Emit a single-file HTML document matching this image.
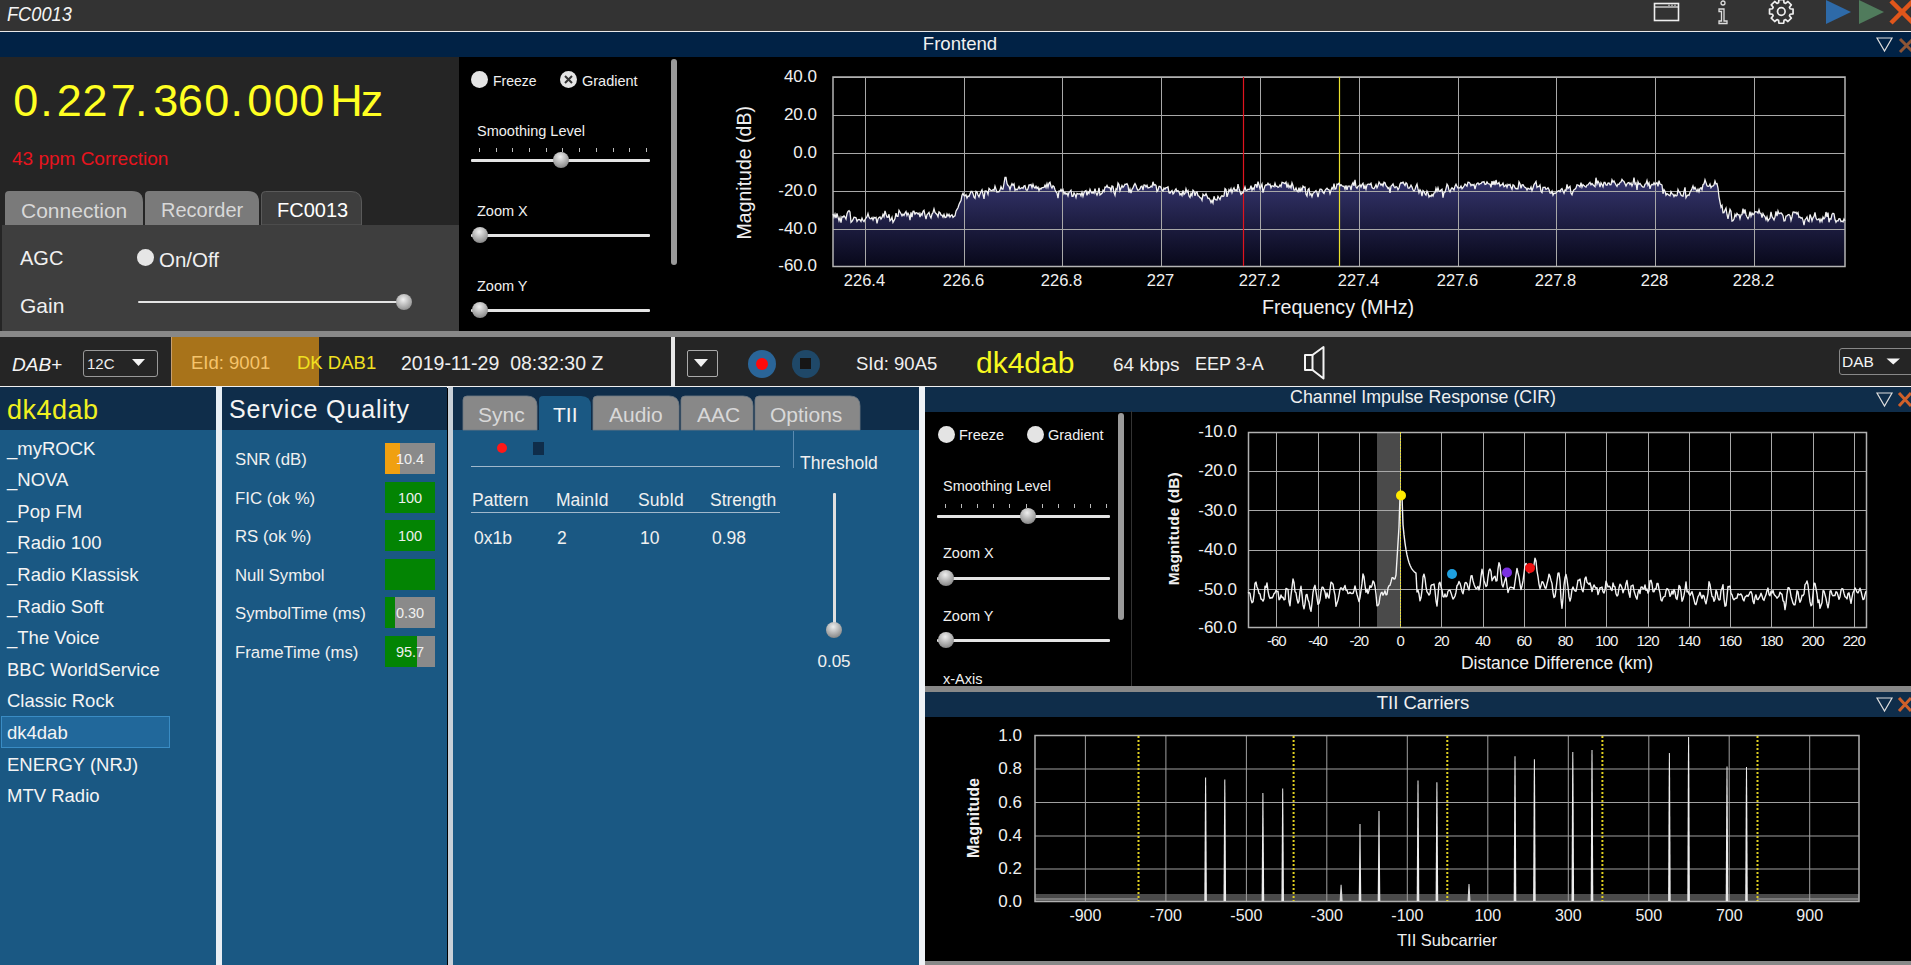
<!DOCTYPE html><html><head><meta charset="utf-8"><style>
html,body{margin:0;padding:0;width:1911px;height:965px;overflow:hidden;background:#000;font-family:"Liberation Sans",sans-serif;}
.t{position:absolute;white-space:pre;line-height:1;}
.b{position:absolute;}
svg{position:absolute;overflow:visible;}
</style></head><body>
<div class="b" style="left:0px;top:0px;width:1911px;height:31px;background:#333333;"></div>
<div class="t" style="left:7px;top:4.3px;font-size:20px;color:#f4f4f4;font-style:italic;transform:scaleX(0.91);transform-origin:0 0;">FC0013</div>
<div class="b" style="left:0px;top:31px;width:1911px;height:1px;background:#e8e8e8;"></div>
<svg style="left:0;top:0" width="1911" height="31">
<rect x="1654.5" y="3.5" width="24" height="17" fill="none" stroke="#eee" stroke-width="1.6"/>
<line x1="1654.5" y1="7" x2="1678.5" y2="7" stroke="#eee" stroke-width="1.2"/>
<circle cx="1669" cy="5.3" r="0.7" fill="#eee"/><circle cx="1672" cy="5.3" r="0.7" fill="#eee"/><circle cx="1675" cy="5.3" r="0.7" fill="#eee"/>
<circle cx="1723" cy="3" r="2" fill="none" stroke="#ddd" stroke-width="1.3"/>
<path d="M1719 9 h5 v12 h3 v2.5 h-8 v-2.5 h2.5 v-9.5 h-2.5z" fill="none" stroke="#ddd" stroke-width="1.3"/>
<g transform="translate(1781.3,11.5)">
<path d="M-2.72,-8.79 L-2.38,-11.76 L2.38,-11.76 L2.72,-8.79 L4.29,-8.14 L6.63,-10.00 L10.00,-6.63 L8.14,-4.29 L8.79,-2.72 L11.76,-2.38 L11.76,2.38 L8.79,2.72 L8.14,4.29 L10.00,6.63 L6.63,10.00 L4.29,8.14 L2.72,8.79 L2.38,11.76 L-2.38,11.76 L-2.72,8.79 L-4.29,8.14 L-6.63,10.00 L-10.00,6.63 L-8.14,4.29 L-8.79,2.72 L-11.76,2.38 L-11.76,-2.38 L-8.79,-2.72 L-8.14,-4.29 L-10.00,-6.63 L-6.63,-10.00 L-4.29,-8.14 Z" fill="none" stroke="#eee" stroke-width="1.7" stroke-linejoin="round"/>
<circle cx="0" cy="0" r="3.8" fill="none" stroke="#eee" stroke-width="1.7"/>
</g>
<path d="M1826 0 L1851 12 L1826 24 Z" fill="#2e6aa8"/>
<path d="M1859 0 L1884 12 L1859 24 Z" fill="#507b5c"/>
<path d="M1891 1 L1913 23 M1913 1 L1891 23" stroke="#e0561b" stroke-width="4.5"/>
</svg>
<div class="b" style="left:0px;top:32px;width:1911px;height:25px;background:#012245;"></div>
<div class="t" style="left:0px;top:35px;font-size:18.6px;color:#f0f0f0;width:1920px;text-align:center;">Frontend</div>
<svg style="left:0;top:32" width="1911" height="25">
<path d="M1877 6 L1892 6 L1884.5 19 Z" fill="none" stroke="#ddd" stroke-width="1.2"/>
<path d="M1900 7 L1913 20 M1913 7 L1900 20" stroke="#8f5535" stroke-width="3"/>
</svg>
<div class="b" style="left:0px;top:57px;width:459px;height:274px;background:#252525;"></div>
<div class="t" style="left:13.26px;top:77.9px;font-size:45px;color:#ffff22;">0</div>
<div class="t" style="left:40.2px;top:77.9px;font-size:45px;color:#ffff22;">.</div>
<div class="t" style="left:56.75px;top:77.9px;font-size:45px;color:#ffff22;">2</div>
<div class="t" style="left:82.55px;top:77.9px;font-size:45px;color:#ffff22;">2</div>
<div class="t" style="left:110.65px;top:77.9px;font-size:45px;color:#ffff22;">7</div>
<div class="t" style="left:134.9px;top:77.9px;font-size:45px;color:#ffff22;">.</div>
<div class="t" style="left:153.26px;top:77.9px;font-size:45px;color:#ffff22;">3</div>
<div class="t" style="left:177.75px;top:77.9px;font-size:45px;color:#ffff22;">6</div>
<div class="t" style="left:204.26px;top:77.9px;font-size:45px;color:#ffff22;">0</div>
<div class="t" style="left:230.4px;top:77.9px;font-size:45px;color:#ffff22;">.</div>
<div class="t" style="left:247.26px;top:77.9px;font-size:45px;color:#ffff22;">0</div>
<div class="t" style="left:273.66px;top:77.9px;font-size:45px;color:#ffff22;">0</div>
<div class="t" style="left:299.26px;top:77.9px;font-size:45px;color:#ffff22;">0</div>
<div class="t" style="left:330.3px;top:77.9px;font-size:45px;color:#ffff22;">H</div>
<div class="t" style="left:360.86px;top:77.9px;font-size:45px;color:#ffff22;">z</div>
<div class="t" style="left:12px;top:149px;font-size:19px;color:#e8141e;">43 ppm Correction</div>
<svg style="left:0;top:185" width="459" height="45">
<path d="M5 40 V10 Q5 6 9 6 H132 Q143 6 143 17 V40 Z" fill="#7a7a7a"/>
<path d="M145 40 V10 Q145 6 149 6 H248 Q259 6 259 17 V40 Z" fill="#7a7a7a"/>
<path d="M261.5 40 V10 Q261.5 6.5 265.5 6.5 H351 Q361.5 6.5 361.5 17 V40 Z" fill="#3e3e3e" stroke="#5a5a5a" stroke-width="1"/>
</svg>
<div class="t" style="left:21px;top:200px;font-size:21px;color:#d8d8d8;">Connection</div>
<div class="t" style="left:161px;top:200px;font-size:20px;color:#d8d8d8;">Recorder</div>
<div class="t" style="left:277px;top:200px;font-size:20px;color:#ffffff;">FC0013</div>
<div class="b" style="left:2px;top:225px;width:457px;height:106px;background:#3e3e3e;"></div>
<div class="t" style="left:20px;top:248px;font-size:20px;color:#f0f0f0;">AGC</div>
<div class="b" style="left:137px;top:249px;width:17px;height:17px;border-radius:50%;background:#e6e6e6;"></div>
<div class="t" style="left:159px;top:250px;font-size:20.5px;color:#f0f0f0;">On/Off</div>
<div class="t" style="left:20px;top:295px;font-size:21px;color:#f0f0f0;">Gain</div>
<div class="b" style="left:138px;top:300.5px;width:260px;height:2.2px;background:#e4e4e4;border-radius:1px;"></div>
<div class="b" style="left:396px;top:294px;width:16px;height:16px;border-radius:50%;background:radial-gradient(circle at 45% 35%,#f0f0f0,#9a9a9a 70%,#707070);"></div>
<div class="b" style="left:459px;top:57px;width:226px;height:274px;background:#000;"></div>
<div class="b" style="left:471.0px;top:71.0px;width:17px;height:17px;border-radius:50%;background:#e4e4e4;"></div>
<div class="t" style="left:493px;top:74px;font-size:14px;color:#f0f0f0;">Freeze</div>
<div class="b" style="left:560.0px;top:71.0px;width:17px;height:17px;border-radius:50%;background:#e4e4e4;"></div>
<svg style="left:560.0px;top:71.0px" width="17" height="17"><path d="M5 5 L12 12 M12 5 L5 12" stroke="#333" stroke-width="2"/></svg>
<div class="t" style="left:582px;top:74px;font-size:14.5px;color:#f0f0f0;">Gradient</div>
<div class="t" style="left:477px;top:124px;font-size:14.5px;color:#f0f0f0;">Smoothing Level</div>
<div class="b" style="left:471px;top:159.2px;width:179px;height:2.4px;background:#e4e4e4;border-radius:1px;"></div>
<div class="b" style="left:479px;top:148px;width:1px;height:4px;background:#bbb;"></div>
<div class="b" style="left:496px;top:148px;width:1px;height:4px;background:#bbb;"></div>
<div class="b" style="left:512px;top:148px;width:1px;height:4px;background:#bbb;"></div>
<div class="b" style="left:529px;top:148px;width:1px;height:4px;background:#bbb;"></div>
<div class="b" style="left:546px;top:148px;width:1px;height:4px;background:#bbb;"></div>
<div class="b" style="left:562px;top:148px;width:1px;height:4px;background:#bbb;"></div>
<div class="b" style="left:579px;top:148px;width:1px;height:4px;background:#bbb;"></div>
<div class="b" style="left:596px;top:148px;width:1px;height:4px;background:#bbb;"></div>
<div class="b" style="left:613px;top:148px;width:1px;height:4px;background:#bbb;"></div>
<div class="b" style="left:629px;top:148px;width:1px;height:4px;background:#bbb;"></div>
<div class="b" style="left:646px;top:148px;width:1px;height:4px;background:#bbb;"></div>
<div class="b" style="left:553px;top:152px;width:16px;height:16px;border-radius:50%;background:radial-gradient(circle at 45% 30%,#eeeeee,#a0a0a0 60%,#6a6a6a);"></div>
<div class="t" style="left:477px;top:204px;font-size:14.5px;color:#f0f0f0;">Zoom X</div>
<div class="b" style="left:471px;top:234.2px;width:179px;height:2.4px;background:#e4e4e4;border-radius:1px;"></div>
<div class="b" style="left:472px;top:227px;width:16px;height:16px;border-radius:50%;background:radial-gradient(circle at 45% 30%,#eeeeee,#a0a0a0 60%,#6a6a6a);"></div>
<div class="t" style="left:477px;top:279px;font-size:14.5px;color:#f0f0f0;">Zoom Y</div>
<div class="b" style="left:471px;top:309.2px;width:179px;height:2.4px;background:#e4e4e4;border-radius:1px;"></div>
<div class="b" style="left:472px;top:302px;width:16px;height:16px;border-radius:50%;background:radial-gradient(circle at 45% 30%,#eeeeee,#a0a0a0 60%,#6a6a6a);"></div>
<div class="b" style="left:671px;top:59px;width:6px;height:206px;background:#9a9a9a;border-radius:3px;"></div>
<div class="b" style="left:685px;top:57px;width:1226px;height:274px;background:#000;"></div>
<svg style="left:0;top:0" width="1911" height="331">
<defs><linearGradient id="sg" x1="0" y1="0" x2="0" y2="1"><stop offset="0" stop-color="#35356e"/><stop offset="1" stop-color="#08081a"/></linearGradient></defs>
<path d="M833,266 L833.0,213.9 L834.0,217.1 L835.0,214.1 L836.0,218.1 L837.0,213.5 L838.0,217.1 L839.0,220.7 L840.0,217.6 L841.0,222.7 L842.0,216.7 L843.0,217.1 L844.0,215.8 L845.0,217.2 L846.0,219.1 L847.0,213.8 L848.0,211.5 L849.0,210.7 L850.0,212.1 L851.0,222.3 L852.0,221.4 L853.0,219.7 L854.0,217.3 L855.0,217.4 L856.0,217.8 L857.0,221.4 L858.0,219.8 L859.0,219.4 L860.0,219.8 L861.0,221.4 L862.0,218.1 L863.0,220.5 L864.0,221.6 L865.0,219.5 L866.0,218.0 L867.0,216.6 L868.0,213.5 L869.0,217.1 L870.0,218.7 L871.0,218.8 L872.0,217.6 L873.0,219.9 L874.0,217.2 L875.0,218.0 L876.0,217.4 L877.0,223.4 L878.0,219.0 L879.0,217.4 L880.0,216.9 L881.0,219.2 L882.0,217.6 L883.0,214.3 L884.0,216.7 L885.0,210.9 L886.0,214.3 L887.0,217.1 L888.0,217.2 L889.0,214.3 L890.0,220.8 L891.0,219.7 L892.0,217.3 L893.0,222.4 L894.0,220.7 L895.0,218.6 L896.0,213.2 L897.0,216.4 L898.0,216.4 L899.0,210.3 L900.0,212.0 L901.0,213.8 L902.0,215.8 L903.0,214.1 L904.0,215.5 L905.0,213.0 L906.0,211.5 L907.0,215.4 L908.0,213.1 L909.0,214.9 L910.0,220.1 L911.0,212.4 L912.0,217.1 L913.0,211.4 L914.0,211.2 L915.0,214.2 L916.0,212.8 L917.0,212.9 L918.0,214.1 L919.0,213.0 L920.0,217.2 L921.0,213.6 L922.0,215.1 L923.0,211.4 L924.0,210.4 L925.0,215.1 L926.0,219.2 L927.0,214.9 L928.0,213.7 L929.0,212.4 L930.0,216.0 L931.0,217.9 L932.0,214.1 L933.0,212.5 L934.0,208.9 L935.0,212.5 L936.0,213.5 L937.0,214.5 L938.0,216.7 L939.0,211.9 L940.0,212.7 L941.0,215.1 L942.0,215.1 L943.0,217.1 L944.0,214.4 L945.0,217.5 L946.0,217.4 L947.0,214.0 L948.0,216.0 L949.0,214.2 L950.0,217.0 L951.0,215.5 L952.0,214.7 L953.0,217.3 L954.0,216.4 L955.0,215.8 L956.0,211.2 L957.0,209.4 L958.0,207.8 L959.0,204.5 L960.0,202.4 L961.0,200.5 L962.0,195.1 L963.0,193.2 L964.0,195.7 L965.0,195.8 L966.0,194.8 L967.0,198.1 L968.0,196.1 L969.0,196.4 L970.0,193.9 L971.0,191.4 L972.0,191.4 L973.0,193.7 L974.0,197.3 L975.0,198.4 L976.0,191.4 L977.0,192.0 L978.0,195.0 L979.0,196.9 L980.0,193.9 L981.0,191.7 L982.0,189.8 L983.0,194.4 L984.0,198.8 L985.0,191.1 L986.0,191.0 L987.0,191.6 L988.0,194.3 L989.0,188.4 L990.0,189.5 L991.0,190.3 L992.0,190.6 L993.0,189.6 L994.0,190.5 L995.0,186.2 L996.0,189.2 L997.0,192.1 L998.0,191.6 L999.0,191.7 L1000.0,190.1 L1001.0,186.6 L1002.0,189.0 L1003.0,189.0 L1004.0,183.5 L1005.0,177.5 L1006.0,177.5 L1007.0,183.5 L1008.0,185.5 L1009.0,186.3 L1010.0,189.7 L1011.0,186.0 L1012.0,183.7 L1013.0,185.3 L1014.0,183.9 L1015.0,190.3 L1016.0,189.1 L1017.0,189.8 L1018.0,188.6 L1019.0,186.5 L1020.0,188.8 L1021.0,188.3 L1022.0,187.6 L1023.0,188.4 L1024.0,186.1 L1025.0,185.6 L1026.0,189.7 L1027.0,190.4 L1028.0,188.7 L1029.0,185.0 L1030.0,185.0 L1031.0,184.5 L1032.0,187.8 L1033.0,184.4 L1034.0,187.2 L1035.0,188.1 L1036.0,186.2 L1037.0,188.5 L1038.0,187.2 L1039.0,190.5 L1040.0,188.2 L1041.0,189.0 L1042.0,187.7 L1043.0,187.7 L1044.0,187.5 L1045.0,185.2 L1046.0,187.5 L1047.0,183.7 L1048.0,187.2 L1049.0,183.2 L1050.0,182.3 L1051.0,186.2 L1052.0,188.1 L1053.0,185.8 L1054.0,186.7 L1055.0,189.7 L1056.0,192.0 L1057.0,193.1 L1058.0,198.2 L1059.0,191.0 L1060.0,191.2 L1061.0,189.3 L1062.0,191.2 L1063.0,189.7 L1064.0,193.9 L1065.0,192.4 L1066.0,194.1 L1067.0,193.1 L1068.0,195.8 L1069.0,192.3 L1070.0,191.5 L1071.0,190.3 L1072.0,196.4 L1073.0,196.3 L1074.0,193.0 L1075.0,194.3 L1076.0,197.4 L1077.0,193.5 L1078.0,193.9 L1079.0,194.0 L1080.0,193.6 L1081.0,195.9 L1082.0,192.3 L1083.0,196.2 L1084.0,192.7 L1085.0,191.2 L1086.0,190.5 L1087.0,195.4 L1088.0,191.8 L1089.0,193.4 L1090.0,189.4 L1091.0,192.0 L1092.0,193.3 L1093.0,192.0 L1094.0,193.2 L1095.0,188.7 L1096.0,192.9 L1097.0,195.1 L1098.0,192.8 L1099.0,187.8 L1100.0,195.0 L1101.0,194.1 L1102.0,193.4 L1103.0,190.2 L1104.0,191.7 L1105.0,187.1 L1106.0,187.3 L1107.0,185.4 L1108.0,187.6 L1109.0,187.4 L1110.0,187.8 L1111.0,190.9 L1112.0,186.0 L1113.0,186.4 L1114.0,192.7 L1115.0,195.2 L1116.0,188.8 L1117.0,189.7 L1118.0,183.1 L1119.0,184.6 L1120.0,190.7 L1121.0,188.0 L1122.0,185.6 L1123.0,187.4 L1124.0,186.2 L1125.0,184.2 L1126.0,184.3 L1127.0,183.6 L1128.0,185.6 L1129.0,192.7 L1130.0,189.1 L1131.0,193.1 L1132.0,189.3 L1133.0,187.9 L1134.0,185.4 L1135.0,183.6 L1136.0,185.5 L1137.0,188.7 L1138.0,190.4 L1139.0,189.8 L1140.0,188.8 L1141.0,186.6 L1142.0,186.1 L1143.0,190.2 L1144.0,184.9 L1145.0,185.0 L1146.0,187.0 L1147.0,185.3 L1148.0,188.0 L1149.0,187.7 L1150.0,187.4 L1151.0,186.2 L1152.0,186.9 L1153.0,181.8 L1154.0,185.3 L1155.0,184.6 L1156.0,185.4 L1157.0,191.4 L1158.0,190.2 L1159.0,186.3 L1160.0,186.3 L1161.0,187.6 L1162.0,190.1 L1163.0,190.9 L1164.0,188.1 L1165.0,189.2 L1166.0,187.6 L1167.0,187.6 L1168.0,186.9 L1169.0,192.7 L1170.0,193.1 L1171.0,191.6 L1172.0,190.6 L1173.0,193.9 L1174.0,192.8 L1175.0,190.2 L1176.0,188.8 L1177.0,191.4 L1178.0,190.7 L1179.0,192.1 L1180.0,194.8 L1181.0,193.5 L1182.0,195.5 L1183.0,190.4 L1184.0,194.5 L1185.0,193.4 L1186.0,188.8 L1187.0,192.1 L1188.0,190.6 L1189.0,196.0 L1190.0,197.5 L1191.0,193.5 L1192.0,195.7 L1193.0,190.2 L1194.0,191.2 L1195.0,195.9 L1196.0,192.4 L1197.0,191.9 L1198.0,195.7 L1199.0,196.2 L1200.0,197.7 L1201.0,198.1 L1202.0,200.3 L1203.0,194.3 L1204.0,195.5 L1205.0,195.5 L1206.0,193.8 L1207.0,196.1 L1208.0,198.4 L1209.0,198.2 L1210.0,199.8 L1211.0,202.5 L1212.0,200.4 L1213.0,203.0 L1214.0,196.3 L1215.0,199.3 L1216.0,199.8 L1217.0,200.0 L1218.0,196.4 L1219.0,198.0 L1220.0,199.6 L1221.0,196.6 L1222.0,195.7 L1223.0,196.5 L1224.0,195.9 L1225.0,188.6 L1226.0,189.6 L1227.0,196.8 L1228.0,193.8 L1229.0,189.7 L1230.0,191.3 L1231.0,188.7 L1232.0,192.6 L1233.0,189.4 L1234.0,187.8 L1235.0,190.6 L1236.0,189.8 L1237.0,190.9 L1238.0,184.1 L1239.0,188.4 L1240.0,191.8 L1241.0,194.3 L1242.0,192.8 L1243.0,193.0 L1244.0,190.0 L1245.0,187.0 L1246.0,190.4 L1247.0,190.2 L1248.0,189.2 L1249.0,189.6 L1250.0,189.0 L1251.0,185.6 L1252.0,190.3 L1253.0,188.1 L1254.0,189.4 L1255.0,184.7 L1256.0,184.5 L1257.0,187.7 L1258.0,181.6 L1259.0,185.0 L1260.0,188.6 L1261.0,186.5 L1262.0,184.1 L1263.0,192.7 L1264.0,189.1 L1265.0,185.9 L1266.0,184.8 L1267.0,185.1 L1268.0,183.3 L1269.0,184.8 L1270.0,184.2 L1271.0,187.8 L1272.0,185.7 L1273.0,186.0 L1274.0,186.7 L1275.0,183.2 L1276.0,186.4 L1277.0,186.2 L1278.0,187.5 L1279.0,186.9 L1280.0,185.0 L1281.0,186.6 L1282.0,182.3 L1283.0,182.7 L1284.0,183.1 L1285.0,183.6 L1286.0,182.2 L1287.0,187.6 L1288.0,184.1 L1289.0,187.6 L1290.0,185.8 L1291.0,188.0 L1292.0,183.0 L1293.0,185.8 L1294.0,190.1 L1295.0,190.1 L1296.0,188.0 L1297.0,190.8 L1298.0,191.7 L1299.0,187.7 L1300.0,192.2 L1301.0,188.3 L1302.0,190.7 L1303.0,186.2 L1304.0,187.3 L1305.0,187.1 L1306.0,194.3 L1307.0,196.0 L1308.0,189.5 L1309.0,188.5 L1310.0,194.9 L1311.0,193.7 L1312.0,196.6 L1313.0,193.4 L1314.0,192.6 L1315.0,191.7 L1316.0,190.6 L1317.0,192.5 L1318.0,197.0 L1319.0,192.3 L1320.0,189.1 L1321.0,189.1 L1322.0,190.0 L1323.0,192.3 L1324.0,193.4 L1325.0,190.5 L1326.0,189.2 L1327.0,188.3 L1328.0,189.5 L1329.0,189.7 L1330.0,193.6 L1331.0,190.3 L1332.0,187.6 L1333.0,189.1 L1334.0,183.7 L1335.0,189.1 L1336.0,188.8 L1337.0,184.1 L1338.0,184.5 L1339.0,183.2 L1340.0,185.8 L1341.0,184.7 L1342.0,185.7 L1343.0,186.3 L1344.0,186.2 L1345.0,189.0 L1346.0,185.3 L1347.0,189.8 L1348.0,186.1 L1349.0,186.1 L1350.0,186.2 L1351.0,190.1 L1352.0,184.7 L1353.0,182.7 L1354.0,185.8 L1355.0,179.9 L1356.0,187.1 L1357.0,188.3 L1358.0,186.2 L1359.0,186.0 L1360.0,184.8 L1361.0,187.0 L1362.0,184.5 L1363.0,183.3 L1364.0,188.8 L1365.0,185.7 L1366.0,189.2 L1367.0,184.9 L1368.0,184.2 L1369.0,184.2 L1370.0,184.7 L1371.0,183.3 L1372.0,187.6 L1373.0,188.3 L1374.0,188.7 L1375.0,186.9 L1376.0,184.6 L1377.0,187.8 L1378.0,185.8 L1379.0,182.0 L1380.0,183.5 L1381.0,185.2 L1382.0,184.0 L1383.0,186.0 L1384.0,182.3 L1385.0,182.8 L1386.0,185.6 L1387.0,186.7 L1388.0,188.5 L1389.0,187.6 L1390.0,192.8 L1391.0,186.3 L1392.0,185.3 L1393.0,183.9 L1394.0,186.6 L1395.0,187.8 L1396.0,186.5 L1397.0,187.1 L1398.0,189.8 L1399.0,188.1 L1400.0,184.0 L1401.0,182.6 L1402.0,183.1 L1403.0,182.0 L1404.0,183.9 L1405.0,185.5 L1406.0,182.8 L1407.0,183.9 L1408.0,188.0 L1409.0,188.3 L1410.0,187.2 L1411.0,185.2 L1412.0,187.0 L1413.0,190.0 L1414.0,191.0 L1415.0,189.5 L1416.0,186.3 L1417.0,184.1 L1418.0,189.0 L1419.0,192.7 L1420.0,189.8 L1421.0,191.5 L1422.0,196.2 L1423.0,190.5 L1424.0,191.5 L1425.0,193.8 L1426.0,195.0 L1427.0,191.1 L1428.0,193.0 L1429.0,197.0 L1430.0,195.6 L1431.0,196.4 L1432.0,194.6 L1433.0,196.1 L1434.0,193.0 L1435.0,192.7 L1436.0,188.2 L1437.0,191.1 L1438.0,187.7 L1439.0,191.1 L1440.0,191.5 L1441.0,189.9 L1442.0,189.2 L1443.0,197.6 L1444.0,192.3 L1445.0,192.1 L1446.0,188.6 L1447.0,184.2 L1448.0,185.8 L1449.0,190.3 L1450.0,191.9 L1451.0,189.2 L1452.0,187.7 L1453.0,188.8 L1454.0,190.0 L1455.0,186.2 L1456.0,184.2 L1457.0,186.4 L1458.0,188.1 L1459.0,187.9 L1460.0,187.9 L1461.0,186.1 L1462.0,188.7 L1463.0,187.5 L1464.0,186.0 L1465.0,184.0 L1466.0,185.0 L1467.0,186.2 L1468.0,182.2 L1469.0,182.3 L1470.0,183.3 L1471.0,185.7 L1472.0,184.4 L1473.0,185.3 L1474.0,184.5 L1475.0,189.0 L1476.0,185.3 L1477.0,183.4 L1478.0,182.8 L1479.0,184.7 L1480.0,183.6 L1481.0,183.6 L1482.0,182.1 L1483.0,182.0 L1484.0,181.6 L1485.0,184.4 L1486.0,184.1 L1487.0,181.9 L1488.0,183.5 L1489.0,183.9 L1490.0,184.0 L1491.0,187.3 L1492.0,181.1 L1493.0,184.9 L1494.0,180.8 L1495.0,185.2 L1496.0,180.0 L1497.0,183.9 L1498.0,183.6 L1499.0,182.6 L1500.0,186.1 L1501.0,184.8 L1502.0,184.8 L1503.0,183.1 L1504.0,186.7 L1505.0,185.9 L1506.0,184.8 L1507.0,187.4 L1508.0,184.4 L1509.0,185.2 L1510.0,184.3 L1511.0,187.4 L1512.0,189.3 L1513.0,184.8 L1514.0,185.4 L1515.0,187.8 L1516.0,188.7 L1517.0,188.5 L1518.0,188.7 L1519.0,181.8 L1520.0,183.7 L1521.0,188.4 L1522.0,184.8 L1523.0,184.7 L1524.0,186.4 L1525.0,187.4 L1526.0,188.0 L1527.0,190.1 L1528.0,188.2 L1529.0,188.8 L1530.0,189.2 L1531.0,187.0 L1532.0,190.6 L1533.0,188.1 L1534.0,184.6 L1535.0,183.1 L1536.0,181.5 L1537.0,187.4 L1538.0,186.4 L1539.0,186.6 L1540.0,185.0 L1541.0,191.4 L1542.0,192.6 L1543.0,187.3 L1544.0,187.3 L1545.0,187.2 L1546.0,189.3 L1547.0,188.7 L1548.0,187.7 L1549.0,189.5 L1550.0,193.0 L1551.0,193.2 L1552.0,191.1 L1553.0,195.1 L1554.0,193.1 L1555.0,193.6 L1556.0,192.9 L1557.0,191.8 L1558.0,191.0 L1559.0,190.6 L1560.0,191.8 L1561.0,189.4 L1562.0,188.5 L1563.0,191.0 L1564.0,193.2 L1565.0,190.0 L1566.0,190.3 L1567.0,184.3 L1568.0,188.6 L1569.0,187.3 L1570.0,186.3 L1571.0,193.2 L1572.0,194.7 L1573.0,191.5 L1574.0,189.7 L1575.0,189.2 L1576.0,188.0 L1577.0,184.7 L1578.0,185.0 L1579.0,185.8 L1580.0,186.9 L1581.0,182.6 L1582.0,187.0 L1583.0,184.6 L1584.0,185.6 L1585.0,186.5 L1586.0,187.1 L1587.0,185.0 L1588.0,184.8 L1589.0,183.4 L1590.0,182.4 L1591.0,184.8 L1592.0,183.5 L1593.0,184.7 L1594.0,185.7 L1595.0,186.6 L1596.0,177.7 L1597.0,183.9 L1598.0,181.2 L1599.0,183.0 L1600.0,187.0 L1601.0,182.8 L1602.0,184.6 L1603.0,186.8 L1604.0,182.5 L1605.0,182.5 L1606.0,185.0 L1607.0,185.3 L1608.0,183.0 L1609.0,182.9 L1610.0,184.8 L1611.0,184.6 L1612.0,179.9 L1613.0,182.1 L1614.0,181.0 L1615.0,183.0 L1616.0,185.0 L1617.0,186.4 L1618.0,184.1 L1619.0,184.5 L1620.0,182.4 L1621.0,182.0 L1622.0,179.4 L1623.0,180.8 L1624.0,181.4 L1625.0,183.7 L1626.0,185.9 L1627.0,183.9 L1628.0,182.9 L1629.0,182.6 L1630.0,184.5 L1631.0,183.0 L1632.0,185.9 L1633.0,183.4 L1634.0,177.7 L1635.0,184.1 L1636.0,183.0 L1637.0,189.9 L1638.0,181.8 L1639.0,184.2 L1640.0,183.4 L1641.0,184.9 L1642.0,186.2 L1643.0,187.2 L1644.0,187.2 L1645.0,184.2 L1646.0,183.8 L1647.0,180.5 L1648.0,185.1 L1649.0,182.9 L1650.0,188.8 L1651.0,185.3 L1652.0,184.4 L1653.0,184.9 L1654.0,182.7 L1655.0,184.6 L1656.0,183.5 L1657.0,182.6 L1658.0,186.3 L1659.0,180.6 L1660.0,184.0 L1661.0,184.3 L1662.0,185.1 L1663.0,193.8 L1664.0,189.6 L1665.0,191.2 L1666.0,195.2 L1667.0,193.6 L1668.0,194.2 L1669.0,195.2 L1670.0,195.8 L1671.0,191.7 L1672.0,193.7 L1673.0,194.3 L1674.0,196.6 L1675.0,194.7 L1676.0,195.9 L1677.0,195.5 L1678.0,189.6 L1679.0,191.9 L1680.0,192.4 L1681.0,195.0 L1682.0,195.8 L1683.0,196.1 L1684.0,191.7 L1685.0,187.3 L1686.0,197.6 L1687.0,195.9 L1688.0,195.0 L1689.0,195.4 L1690.0,192.2 L1691.0,190.7 L1692.0,188.5 L1693.0,186.0 L1694.0,189.1 L1695.0,187.4 L1696.0,189.5 L1697.0,191.4 L1698.0,189.2 L1699.0,191.7 L1700.0,188.5 L1701.0,187.8 L1702.0,189.7 L1703.0,184.6 L1704.0,183.9 L1705.0,179.8 L1706.0,182.6 L1707.0,185.7 L1708.0,186.3 L1709.0,186.2 L1710.0,184.1 L1711.0,187.6 L1712.0,186.1 L1713.0,186.1 L1714.0,185.0 L1715.0,181.0 L1716.0,183.9 L1717.0,183.6 L1718.0,188.0 L1719.0,196.8 L1720.0,202.2 L1721.0,207.2 L1722.0,205.4 L1723.0,212.7 L1724.0,212.6 L1725.0,210.0 L1726.0,208.1 L1727.0,214.5 L1728.0,218.8 L1729.0,213.8 L1730.0,209.3 L1731.0,211.1 L1732.0,221.0 L1733.0,220.6 L1734.0,219.1 L1735.0,214.4 L1736.0,216.4 L1737.0,213.4 L1738.0,214.8 L1739.0,214.7 L1740.0,218.6 L1741.0,214.9 L1742.0,214.7 L1743.0,208.7 L1744.0,213.5 L1745.0,209.3 L1746.0,214.7 L1747.0,217.0 L1748.0,218.7 L1749.0,216.5 L1750.0,211.6 L1751.0,216.2 L1752.0,213.0 L1753.0,214.7 L1754.0,213.7 L1755.0,211.5 L1756.0,211.8 L1757.0,211.9 L1758.0,213.1 L1759.0,209.7 L1760.0,213.1 L1761.0,213.3 L1762.0,217.5 L1763.0,213.6 L1764.0,215.5 L1765.0,216.9 L1766.0,219.8 L1767.0,216.9 L1768.0,220.9 L1769.0,219.3 L1770.0,218.3 L1771.0,211.9 L1772.0,216.7 L1773.0,218.2 L1774.0,219.9 L1775.0,217.1 L1776.0,211.4 L1777.0,216.2 L1778.0,210.9 L1779.0,213.7 L1780.0,213.5 L1781.0,212.9 L1782.0,214.0 L1783.0,215.7 L1784.0,221.0 L1785.0,220.8 L1786.0,216.1 L1787.0,216.0 L1788.0,214.8 L1789.0,214.5 L1790.0,215.7 L1791.0,220.3 L1792.0,217.0 L1793.0,212.0 L1794.0,211.9 L1795.0,212.8 L1796.0,212.1 L1797.0,214.0 L1798.0,212.6 L1799.0,217.3 L1800.0,217.0 L1801.0,218.1 L1802.0,217.6 L1803.0,220.4 L1804.0,225.1 L1805.0,219.7 L1806.0,218.7 L1807.0,216.9 L1808.0,220.9 L1809.0,221.6 L1810.0,214.5 L1811.0,217.2 L1812.0,220.9 L1813.0,217.9 L1814.0,216.5 L1815.0,212.3 L1816.0,218.0 L1817.0,219.8 L1818.0,219.6 L1819.0,218.8 L1820.0,221.8 L1821.0,219.1 L1822.0,221.4 L1823.0,217.0 L1824.0,218.9 L1825.0,217.6 L1826.0,212.0 L1827.0,216.9 L1828.0,212.6 L1829.0,222.2 L1830.0,218.8 L1831.0,219.2 L1832.0,214.4 L1833.0,213.4 L1834.0,214.0 L1835.0,219.6 L1836.0,222.3 L1837.0,220.7 L1838.0,220.9 L1839.0,218.7 L1840.0,218.8 L1841.0,221.6 L1842.0,221.1 L1843.0,221.9 L1844.0,219.0 L1845.0,220.8 L1845,266 Z" fill="url(#sg)"/>
<line x1="833" y1="77.5" x2="1845" y2="77.5" stroke="#a8a8a8" stroke-width="1"/><line x1="833" y1="115.5" x2="1845" y2="115.5" stroke="#a8a8a8" stroke-width="1"/><line x1="833" y1="153.5" x2="1845" y2="153.5" stroke="#a8a8a8" stroke-width="1"/><line x1="833" y1="191.5" x2="1845" y2="191.5" stroke="#a8a8a8" stroke-width="1"/><line x1="833" y1="229.5" x2="1845" y2="229.5" stroke="#a8a8a8" stroke-width="1"/><line x1="833" y1="266.5" x2="1845" y2="266.5" stroke="#a8a8a8" stroke-width="1"/><line x1="865.5" y1="77" x2="865.5" y2="266" stroke="#a8a8a8" stroke-width="1"/><line x1="964.5" y1="77" x2="964.5" y2="266" stroke="#a8a8a8" stroke-width="1"/><line x1="1062.5" y1="77" x2="1062.5" y2="266" stroke="#a8a8a8" stroke-width="1"/><line x1="1161.5" y1="77" x2="1161.5" y2="266" stroke="#a8a8a8" stroke-width="1"/><line x1="1260.5" y1="77" x2="1260.5" y2="266" stroke="#a8a8a8" stroke-width="1"/><line x1="1359.5" y1="77" x2="1359.5" y2="266" stroke="#a8a8a8" stroke-width="1"/><line x1="1458.5" y1="77" x2="1458.5" y2="266" stroke="#a8a8a8" stroke-width="1"/><line x1="1556.5" y1="77" x2="1556.5" y2="266" stroke="#a8a8a8" stroke-width="1"/><line x1="1655.5" y1="77" x2="1655.5" y2="266" stroke="#a8a8a8" stroke-width="1"/><line x1="1754.5" y1="77" x2="1754.5" y2="266" stroke="#a8a8a8" stroke-width="1"/>
<rect x="833" y="77" width="1012" height="189.5" fill="none" stroke="#b4b4b4" stroke-width="1.5"/>
<line x1="1243.5" y1="77" x2="1243.5" y2="266" stroke="#e0141e" stroke-width="1.2"/>
<line x1="1339.5" y1="77" x2="1339.5" y2="266" stroke="#e8e030" stroke-width="1.2"/>
<polyline points="833.0,213.9 834.0,217.1 835.0,214.1 836.0,218.1 837.0,213.5 838.0,217.1 839.0,220.7 840.0,217.6 841.0,222.7 842.0,216.7 843.0,217.1 844.0,215.8 845.0,217.2 846.0,219.1 847.0,213.8 848.0,211.5 849.0,210.7 850.0,212.1 851.0,222.3 852.0,221.4 853.0,219.7 854.0,217.3 855.0,217.4 856.0,217.8 857.0,221.4 858.0,219.8 859.0,219.4 860.0,219.8 861.0,221.4 862.0,218.1 863.0,220.5 864.0,221.6 865.0,219.5 866.0,218.0 867.0,216.6 868.0,213.5 869.0,217.1 870.0,218.7 871.0,218.8 872.0,217.6 873.0,219.9 874.0,217.2 875.0,218.0 876.0,217.4 877.0,223.4 878.0,219.0 879.0,217.4 880.0,216.9 881.0,219.2 882.0,217.6 883.0,214.3 884.0,216.7 885.0,210.9 886.0,214.3 887.0,217.1 888.0,217.2 889.0,214.3 890.0,220.8 891.0,219.7 892.0,217.3 893.0,222.4 894.0,220.7 895.0,218.6 896.0,213.2 897.0,216.4 898.0,216.4 899.0,210.3 900.0,212.0 901.0,213.8 902.0,215.8 903.0,214.1 904.0,215.5 905.0,213.0 906.0,211.5 907.0,215.4 908.0,213.1 909.0,214.9 910.0,220.1 911.0,212.4 912.0,217.1 913.0,211.4 914.0,211.2 915.0,214.2 916.0,212.8 917.0,212.9 918.0,214.1 919.0,213.0 920.0,217.2 921.0,213.6 922.0,215.1 923.0,211.4 924.0,210.4 925.0,215.1 926.0,219.2 927.0,214.9 928.0,213.7 929.0,212.4 930.0,216.0 931.0,217.9 932.0,214.1 933.0,212.5 934.0,208.9 935.0,212.5 936.0,213.5 937.0,214.5 938.0,216.7 939.0,211.9 940.0,212.7 941.0,215.1 942.0,215.1 943.0,217.1 944.0,214.4 945.0,217.5 946.0,217.4 947.0,214.0 948.0,216.0 949.0,214.2 950.0,217.0 951.0,215.5 952.0,214.7 953.0,217.3 954.0,216.4 955.0,215.8 956.0,211.2 957.0,209.4 958.0,207.8 959.0,204.5 960.0,202.4 961.0,200.5 962.0,195.1 963.0,193.2 964.0,195.7 965.0,195.8 966.0,194.8 967.0,198.1 968.0,196.1 969.0,196.4 970.0,193.9 971.0,191.4 972.0,191.4 973.0,193.7 974.0,197.3 975.0,198.4 976.0,191.4 977.0,192.0 978.0,195.0 979.0,196.9 980.0,193.9 981.0,191.7 982.0,189.8 983.0,194.4 984.0,198.8 985.0,191.1 986.0,191.0 987.0,191.6 988.0,194.3 989.0,188.4 990.0,189.5 991.0,190.3 992.0,190.6 993.0,189.6 994.0,190.5 995.0,186.2 996.0,189.2 997.0,192.1 998.0,191.6 999.0,191.7 1000.0,190.1 1001.0,186.6 1002.0,189.0 1003.0,189.0 1004.0,183.5 1005.0,177.5 1006.0,177.5 1007.0,183.5 1008.0,185.5 1009.0,186.3 1010.0,189.7 1011.0,186.0 1012.0,183.7 1013.0,185.3 1014.0,183.9 1015.0,190.3 1016.0,189.1 1017.0,189.8 1018.0,188.6 1019.0,186.5 1020.0,188.8 1021.0,188.3 1022.0,187.6 1023.0,188.4 1024.0,186.1 1025.0,185.6 1026.0,189.7 1027.0,190.4 1028.0,188.7 1029.0,185.0 1030.0,185.0 1031.0,184.5 1032.0,187.8 1033.0,184.4 1034.0,187.2 1035.0,188.1 1036.0,186.2 1037.0,188.5 1038.0,187.2 1039.0,190.5 1040.0,188.2 1041.0,189.0 1042.0,187.7 1043.0,187.7 1044.0,187.5 1045.0,185.2 1046.0,187.5 1047.0,183.7 1048.0,187.2 1049.0,183.2 1050.0,182.3 1051.0,186.2 1052.0,188.1 1053.0,185.8 1054.0,186.7 1055.0,189.7 1056.0,192.0 1057.0,193.1 1058.0,198.2 1059.0,191.0 1060.0,191.2 1061.0,189.3 1062.0,191.2 1063.0,189.7 1064.0,193.9 1065.0,192.4 1066.0,194.1 1067.0,193.1 1068.0,195.8 1069.0,192.3 1070.0,191.5 1071.0,190.3 1072.0,196.4 1073.0,196.3 1074.0,193.0 1075.0,194.3 1076.0,197.4 1077.0,193.5 1078.0,193.9 1079.0,194.0 1080.0,193.6 1081.0,195.9 1082.0,192.3 1083.0,196.2 1084.0,192.7 1085.0,191.2 1086.0,190.5 1087.0,195.4 1088.0,191.8 1089.0,193.4 1090.0,189.4 1091.0,192.0 1092.0,193.3 1093.0,192.0 1094.0,193.2 1095.0,188.7 1096.0,192.9 1097.0,195.1 1098.0,192.8 1099.0,187.8 1100.0,195.0 1101.0,194.1 1102.0,193.4 1103.0,190.2 1104.0,191.7 1105.0,187.1 1106.0,187.3 1107.0,185.4 1108.0,187.6 1109.0,187.4 1110.0,187.8 1111.0,190.9 1112.0,186.0 1113.0,186.4 1114.0,192.7 1115.0,195.2 1116.0,188.8 1117.0,189.7 1118.0,183.1 1119.0,184.6 1120.0,190.7 1121.0,188.0 1122.0,185.6 1123.0,187.4 1124.0,186.2 1125.0,184.2 1126.0,184.3 1127.0,183.6 1128.0,185.6 1129.0,192.7 1130.0,189.1 1131.0,193.1 1132.0,189.3 1133.0,187.9 1134.0,185.4 1135.0,183.6 1136.0,185.5 1137.0,188.7 1138.0,190.4 1139.0,189.8 1140.0,188.8 1141.0,186.6 1142.0,186.1 1143.0,190.2 1144.0,184.9 1145.0,185.0 1146.0,187.0 1147.0,185.3 1148.0,188.0 1149.0,187.7 1150.0,187.4 1151.0,186.2 1152.0,186.9 1153.0,181.8 1154.0,185.3 1155.0,184.6 1156.0,185.4 1157.0,191.4 1158.0,190.2 1159.0,186.3 1160.0,186.3 1161.0,187.6 1162.0,190.1 1163.0,190.9 1164.0,188.1 1165.0,189.2 1166.0,187.6 1167.0,187.6 1168.0,186.9 1169.0,192.7 1170.0,193.1 1171.0,191.6 1172.0,190.6 1173.0,193.9 1174.0,192.8 1175.0,190.2 1176.0,188.8 1177.0,191.4 1178.0,190.7 1179.0,192.1 1180.0,194.8 1181.0,193.5 1182.0,195.5 1183.0,190.4 1184.0,194.5 1185.0,193.4 1186.0,188.8 1187.0,192.1 1188.0,190.6 1189.0,196.0 1190.0,197.5 1191.0,193.5 1192.0,195.7 1193.0,190.2 1194.0,191.2 1195.0,195.9 1196.0,192.4 1197.0,191.9 1198.0,195.7 1199.0,196.2 1200.0,197.7 1201.0,198.1 1202.0,200.3 1203.0,194.3 1204.0,195.5 1205.0,195.5 1206.0,193.8 1207.0,196.1 1208.0,198.4 1209.0,198.2 1210.0,199.8 1211.0,202.5 1212.0,200.4 1213.0,203.0 1214.0,196.3 1215.0,199.3 1216.0,199.8 1217.0,200.0 1218.0,196.4 1219.0,198.0 1220.0,199.6 1221.0,196.6 1222.0,195.7 1223.0,196.5 1224.0,195.9 1225.0,188.6 1226.0,189.6 1227.0,196.8 1228.0,193.8 1229.0,189.7 1230.0,191.3 1231.0,188.7 1232.0,192.6 1233.0,189.4 1234.0,187.8 1235.0,190.6 1236.0,189.8 1237.0,190.9 1238.0,184.1 1239.0,188.4 1240.0,191.8 1241.0,194.3 1242.0,192.8 1243.0,193.0 1244.0,190.0 1245.0,187.0 1246.0,190.4 1247.0,190.2 1248.0,189.2 1249.0,189.6 1250.0,189.0 1251.0,185.6 1252.0,190.3 1253.0,188.1 1254.0,189.4 1255.0,184.7 1256.0,184.5 1257.0,187.7 1258.0,181.6 1259.0,185.0 1260.0,188.6 1261.0,186.5 1262.0,184.1 1263.0,192.7 1264.0,189.1 1265.0,185.9 1266.0,184.8 1267.0,185.1 1268.0,183.3 1269.0,184.8 1270.0,184.2 1271.0,187.8 1272.0,185.7 1273.0,186.0 1274.0,186.7 1275.0,183.2 1276.0,186.4 1277.0,186.2 1278.0,187.5 1279.0,186.9 1280.0,185.0 1281.0,186.6 1282.0,182.3 1283.0,182.7 1284.0,183.1 1285.0,183.6 1286.0,182.2 1287.0,187.6 1288.0,184.1 1289.0,187.6 1290.0,185.8 1291.0,188.0 1292.0,183.0 1293.0,185.8 1294.0,190.1 1295.0,190.1 1296.0,188.0 1297.0,190.8 1298.0,191.7 1299.0,187.7 1300.0,192.2 1301.0,188.3 1302.0,190.7 1303.0,186.2 1304.0,187.3 1305.0,187.1 1306.0,194.3 1307.0,196.0 1308.0,189.5 1309.0,188.5 1310.0,194.9 1311.0,193.7 1312.0,196.6 1313.0,193.4 1314.0,192.6 1315.0,191.7 1316.0,190.6 1317.0,192.5 1318.0,197.0 1319.0,192.3 1320.0,189.1 1321.0,189.1 1322.0,190.0 1323.0,192.3 1324.0,193.4 1325.0,190.5 1326.0,189.2 1327.0,188.3 1328.0,189.5 1329.0,189.7 1330.0,193.6 1331.0,190.3 1332.0,187.6 1333.0,189.1 1334.0,183.7 1335.0,189.1 1336.0,188.8 1337.0,184.1 1338.0,184.5 1339.0,183.2 1340.0,185.8 1341.0,184.7 1342.0,185.7 1343.0,186.3 1344.0,186.2 1345.0,189.0 1346.0,185.3 1347.0,189.8 1348.0,186.1 1349.0,186.1 1350.0,186.2 1351.0,190.1 1352.0,184.7 1353.0,182.7 1354.0,185.8 1355.0,179.9 1356.0,187.1 1357.0,188.3 1358.0,186.2 1359.0,186.0 1360.0,184.8 1361.0,187.0 1362.0,184.5 1363.0,183.3 1364.0,188.8 1365.0,185.7 1366.0,189.2 1367.0,184.9 1368.0,184.2 1369.0,184.2 1370.0,184.7 1371.0,183.3 1372.0,187.6 1373.0,188.3 1374.0,188.7 1375.0,186.9 1376.0,184.6 1377.0,187.8 1378.0,185.8 1379.0,182.0 1380.0,183.5 1381.0,185.2 1382.0,184.0 1383.0,186.0 1384.0,182.3 1385.0,182.8 1386.0,185.6 1387.0,186.7 1388.0,188.5 1389.0,187.6 1390.0,192.8 1391.0,186.3 1392.0,185.3 1393.0,183.9 1394.0,186.6 1395.0,187.8 1396.0,186.5 1397.0,187.1 1398.0,189.8 1399.0,188.1 1400.0,184.0 1401.0,182.6 1402.0,183.1 1403.0,182.0 1404.0,183.9 1405.0,185.5 1406.0,182.8 1407.0,183.9 1408.0,188.0 1409.0,188.3 1410.0,187.2 1411.0,185.2 1412.0,187.0 1413.0,190.0 1414.0,191.0 1415.0,189.5 1416.0,186.3 1417.0,184.1 1418.0,189.0 1419.0,192.7 1420.0,189.8 1421.0,191.5 1422.0,196.2 1423.0,190.5 1424.0,191.5 1425.0,193.8 1426.0,195.0 1427.0,191.1 1428.0,193.0 1429.0,197.0 1430.0,195.6 1431.0,196.4 1432.0,194.6 1433.0,196.1 1434.0,193.0 1435.0,192.7 1436.0,188.2 1437.0,191.1 1438.0,187.7 1439.0,191.1 1440.0,191.5 1441.0,189.9 1442.0,189.2 1443.0,197.6 1444.0,192.3 1445.0,192.1 1446.0,188.6 1447.0,184.2 1448.0,185.8 1449.0,190.3 1450.0,191.9 1451.0,189.2 1452.0,187.7 1453.0,188.8 1454.0,190.0 1455.0,186.2 1456.0,184.2 1457.0,186.4 1458.0,188.1 1459.0,187.9 1460.0,187.9 1461.0,186.1 1462.0,188.7 1463.0,187.5 1464.0,186.0 1465.0,184.0 1466.0,185.0 1467.0,186.2 1468.0,182.2 1469.0,182.3 1470.0,183.3 1471.0,185.7 1472.0,184.4 1473.0,185.3 1474.0,184.5 1475.0,189.0 1476.0,185.3 1477.0,183.4 1478.0,182.8 1479.0,184.7 1480.0,183.6 1481.0,183.6 1482.0,182.1 1483.0,182.0 1484.0,181.6 1485.0,184.4 1486.0,184.1 1487.0,181.9 1488.0,183.5 1489.0,183.9 1490.0,184.0 1491.0,187.3 1492.0,181.1 1493.0,184.9 1494.0,180.8 1495.0,185.2 1496.0,180.0 1497.0,183.9 1498.0,183.6 1499.0,182.6 1500.0,186.1 1501.0,184.8 1502.0,184.8 1503.0,183.1 1504.0,186.7 1505.0,185.9 1506.0,184.8 1507.0,187.4 1508.0,184.4 1509.0,185.2 1510.0,184.3 1511.0,187.4 1512.0,189.3 1513.0,184.8 1514.0,185.4 1515.0,187.8 1516.0,188.7 1517.0,188.5 1518.0,188.7 1519.0,181.8 1520.0,183.7 1521.0,188.4 1522.0,184.8 1523.0,184.7 1524.0,186.4 1525.0,187.4 1526.0,188.0 1527.0,190.1 1528.0,188.2 1529.0,188.8 1530.0,189.2 1531.0,187.0 1532.0,190.6 1533.0,188.1 1534.0,184.6 1535.0,183.1 1536.0,181.5 1537.0,187.4 1538.0,186.4 1539.0,186.6 1540.0,185.0 1541.0,191.4 1542.0,192.6 1543.0,187.3 1544.0,187.3 1545.0,187.2 1546.0,189.3 1547.0,188.7 1548.0,187.7 1549.0,189.5 1550.0,193.0 1551.0,193.2 1552.0,191.1 1553.0,195.1 1554.0,193.1 1555.0,193.6 1556.0,192.9 1557.0,191.8 1558.0,191.0 1559.0,190.6 1560.0,191.8 1561.0,189.4 1562.0,188.5 1563.0,191.0 1564.0,193.2 1565.0,190.0 1566.0,190.3 1567.0,184.3 1568.0,188.6 1569.0,187.3 1570.0,186.3 1571.0,193.2 1572.0,194.7 1573.0,191.5 1574.0,189.7 1575.0,189.2 1576.0,188.0 1577.0,184.7 1578.0,185.0 1579.0,185.8 1580.0,186.9 1581.0,182.6 1582.0,187.0 1583.0,184.6 1584.0,185.6 1585.0,186.5 1586.0,187.1 1587.0,185.0 1588.0,184.8 1589.0,183.4 1590.0,182.4 1591.0,184.8 1592.0,183.5 1593.0,184.7 1594.0,185.7 1595.0,186.6 1596.0,177.7 1597.0,183.9 1598.0,181.2 1599.0,183.0 1600.0,187.0 1601.0,182.8 1602.0,184.6 1603.0,186.8 1604.0,182.5 1605.0,182.5 1606.0,185.0 1607.0,185.3 1608.0,183.0 1609.0,182.9 1610.0,184.8 1611.0,184.6 1612.0,179.9 1613.0,182.1 1614.0,181.0 1615.0,183.0 1616.0,185.0 1617.0,186.4 1618.0,184.1 1619.0,184.5 1620.0,182.4 1621.0,182.0 1622.0,179.4 1623.0,180.8 1624.0,181.4 1625.0,183.7 1626.0,185.9 1627.0,183.9 1628.0,182.9 1629.0,182.6 1630.0,184.5 1631.0,183.0 1632.0,185.9 1633.0,183.4 1634.0,177.7 1635.0,184.1 1636.0,183.0 1637.0,189.9 1638.0,181.8 1639.0,184.2 1640.0,183.4 1641.0,184.9 1642.0,186.2 1643.0,187.2 1644.0,187.2 1645.0,184.2 1646.0,183.8 1647.0,180.5 1648.0,185.1 1649.0,182.9 1650.0,188.8 1651.0,185.3 1652.0,184.4 1653.0,184.9 1654.0,182.7 1655.0,184.6 1656.0,183.5 1657.0,182.6 1658.0,186.3 1659.0,180.6 1660.0,184.0 1661.0,184.3 1662.0,185.1 1663.0,193.8 1664.0,189.6 1665.0,191.2 1666.0,195.2 1667.0,193.6 1668.0,194.2 1669.0,195.2 1670.0,195.8 1671.0,191.7 1672.0,193.7 1673.0,194.3 1674.0,196.6 1675.0,194.7 1676.0,195.9 1677.0,195.5 1678.0,189.6 1679.0,191.9 1680.0,192.4 1681.0,195.0 1682.0,195.8 1683.0,196.1 1684.0,191.7 1685.0,187.3 1686.0,197.6 1687.0,195.9 1688.0,195.0 1689.0,195.4 1690.0,192.2 1691.0,190.7 1692.0,188.5 1693.0,186.0 1694.0,189.1 1695.0,187.4 1696.0,189.5 1697.0,191.4 1698.0,189.2 1699.0,191.7 1700.0,188.5 1701.0,187.8 1702.0,189.7 1703.0,184.6 1704.0,183.9 1705.0,179.8 1706.0,182.6 1707.0,185.7 1708.0,186.3 1709.0,186.2 1710.0,184.1 1711.0,187.6 1712.0,186.1 1713.0,186.1 1714.0,185.0 1715.0,181.0 1716.0,183.9 1717.0,183.6 1718.0,188.0 1719.0,196.8 1720.0,202.2 1721.0,207.2 1722.0,205.4 1723.0,212.7 1724.0,212.6 1725.0,210.0 1726.0,208.1 1727.0,214.5 1728.0,218.8 1729.0,213.8 1730.0,209.3 1731.0,211.1 1732.0,221.0 1733.0,220.6 1734.0,219.1 1735.0,214.4 1736.0,216.4 1737.0,213.4 1738.0,214.8 1739.0,214.7 1740.0,218.6 1741.0,214.9 1742.0,214.7 1743.0,208.7 1744.0,213.5 1745.0,209.3 1746.0,214.7 1747.0,217.0 1748.0,218.7 1749.0,216.5 1750.0,211.6 1751.0,216.2 1752.0,213.0 1753.0,214.7 1754.0,213.7 1755.0,211.5 1756.0,211.8 1757.0,211.9 1758.0,213.1 1759.0,209.7 1760.0,213.1 1761.0,213.3 1762.0,217.5 1763.0,213.6 1764.0,215.5 1765.0,216.9 1766.0,219.8 1767.0,216.9 1768.0,220.9 1769.0,219.3 1770.0,218.3 1771.0,211.9 1772.0,216.7 1773.0,218.2 1774.0,219.9 1775.0,217.1 1776.0,211.4 1777.0,216.2 1778.0,210.9 1779.0,213.7 1780.0,213.5 1781.0,212.9 1782.0,214.0 1783.0,215.7 1784.0,221.0 1785.0,220.8 1786.0,216.1 1787.0,216.0 1788.0,214.8 1789.0,214.5 1790.0,215.7 1791.0,220.3 1792.0,217.0 1793.0,212.0 1794.0,211.9 1795.0,212.8 1796.0,212.1 1797.0,214.0 1798.0,212.6 1799.0,217.3 1800.0,217.0 1801.0,218.1 1802.0,217.6 1803.0,220.4 1804.0,225.1 1805.0,219.7 1806.0,218.7 1807.0,216.9 1808.0,220.9 1809.0,221.6 1810.0,214.5 1811.0,217.2 1812.0,220.9 1813.0,217.9 1814.0,216.5 1815.0,212.3 1816.0,218.0 1817.0,219.8 1818.0,219.6 1819.0,218.8 1820.0,221.8 1821.0,219.1 1822.0,221.4 1823.0,217.0 1824.0,218.9 1825.0,217.6 1826.0,212.0 1827.0,216.9 1828.0,212.6 1829.0,222.2 1830.0,218.8 1831.0,219.2 1832.0,214.4 1833.0,213.4 1834.0,214.0 1835.0,219.6 1836.0,222.3 1837.0,220.7 1838.0,220.9 1839.0,218.7 1840.0,218.8 1841.0,221.6 1842.0,221.1 1843.0,221.9 1844.0,219.0 1845.0,220.8" fill="none" stroke="#f2f2f2" stroke-width="1.3"/>
</svg>
<div class="t" style="left:700px;top:68.0px;font-size:17px;color:#f0f0f0;width:117px;text-align:right;">40.0</div>
<div class="t" style="left:700px;top:106.0px;font-size:17px;color:#f0f0f0;width:117px;text-align:right;">20.0</div>
<div class="t" style="left:700px;top:144.0px;font-size:17px;color:#f0f0f0;width:117px;text-align:right;">0.0</div>
<div class="t" style="left:700px;top:182.0px;font-size:17px;color:#f0f0f0;width:117px;text-align:right;">-20.0</div>
<div class="t" style="left:700px;top:220.0px;font-size:17px;color:#f0f0f0;width:117px;text-align:right;">-40.0</div>
<div class="t" style="left:700px;top:257.0px;font-size:17px;color:#f0f0f0;width:117px;text-align:right;">-60.0</div>
<div class="t" style="left:814.5px;top:272px;font-size:16.5px;color:#f0f0f0;width:100px;text-align:center;">226.4</div>
<div class="t" style="left:913.5px;top:272px;font-size:16.5px;color:#f0f0f0;width:100px;text-align:center;">226.6</div>
<div class="t" style="left:1011.5px;top:272px;font-size:16.5px;color:#f0f0f0;width:100px;text-align:center;">226.8</div>
<div class="t" style="left:1110.5px;top:272px;font-size:16.5px;color:#f0f0f0;width:100px;text-align:center;">227</div>
<div class="t" style="left:1209.5px;top:272px;font-size:16.5px;color:#f0f0f0;width:100px;text-align:center;">227.2</div>
<div class="t" style="left:1308.5px;top:272px;font-size:16.5px;color:#f0f0f0;width:100px;text-align:center;">227.4</div>
<div class="t" style="left:1407.5px;top:272px;font-size:16.5px;color:#f0f0f0;width:100px;text-align:center;">227.6</div>
<div class="t" style="left:1505.5px;top:272px;font-size:16.5px;color:#f0f0f0;width:100px;text-align:center;">227.8</div>
<div class="t" style="left:1604.5px;top:272px;font-size:16.5px;color:#f0f0f0;width:100px;text-align:center;">228</div>
<div class="t" style="left:1703.5px;top:272px;font-size:16.5px;color:#f0f0f0;width:100px;text-align:center;">228.2</div>
<div class="t" style="left:1238px;top:298px;font-size:19.7px;color:#f0f0f0;width:200px;text-align:center;">Frequency (MHz)</div>
<div class="t" style="left:645px;top:163px;font-size:19.5px;color:#f0f0f0;width:200px;text-align:center;transform:rotate(-90deg);">Magnitude (dB)</div>
<div class="b" style="left:0px;top:331px;width:1911px;height:6px;background:#888888;"></div>
<div class="b" style="left:0px;top:337px;width:1911px;height:49px;background:#252525;"></div>
<div class="t" style="left:12px;top:355px;font-size:19px;color:#f4f4f4;font-style:italic;">DAB+</div>
<div class="b" style="left:83px;top:350px;width:73px;height:25px;border:1px solid #999;border-radius:3px;"></div>
<div class="t" style="left:87px;top:356px;font-size:15px;color:#f0f0f0;">12C</div>
<svg style="left:131px;top:358px" width="16" height="10"><path d="M1 1 L14 1 L7.5 8 Z" fill="#f4f4f4"/></svg>
<div class="b" style="left:171px;top:337px;width:148px;height:49px;background:#a8731a;"></div>
<div class="b" style="left:171px;top:337px;width:1px;height:49px;background:#c8a070;"></div>
<div class="t" style="left:191px;top:354px;font-size:18.5px;color:#f6c46a;">EId: 9001</div>
<div class="t" style="left:297px;top:354px;font-size:18.5px;color:#f0e020;">DK DAB1</div>
<div class="t" style="left:401px;top:354px;font-size:19.5px;color:#eeeeee;">2019-11-29  08:32:30 Z</div>
<div class="b" style="left:671px;top:337px;width:4px;height:49px;background:#e8e8e8;"></div>
<div class="b" style="left:687px;top:350px;width:29px;height:25px;border:1px solid #aaa;border-radius:2px;"></div>
<svg style="left:693px;top:358px" width="16" height="10"><path d="M1 1 L15 1 L8 9 Z" fill="#f0f0f0"/></svg>
<div class="b" style="left:748px;top:349.5px;width:28px;height:28px;border-radius:50%;background:#2a6598;"></div>
<div class="b" style="left:756px;top:357.5px;width:12px;height:12px;border-radius:50%;background:#ff0a0a;"></div>
<div class="b" style="left:792px;top:349.5px;width:28px;height:28px;border-radius:50%;background:#1f4868;"></div>
<div class="b" style="left:800px;top:358px;width:11px;height:11px;background:#161616;"></div>
<div class="t" style="left:856px;top:355px;font-size:18.5px;color:#f0f0f0;">SId: 90A5</div>
<div class="t" style="left:976px;top:348px;font-size:30px;color:#f8f820;">dk4dab</div>
<div class="t" style="left:1113px;top:355px;font-size:19px;color:#f0f0f0;">64 kbps</div>
<div class="t" style="left:1195px;top:355px;font-size:18px;color:#f0f0f0;">EEP 3-A</div>
<svg style="left:1300px;top:346px" width="30" height="34">
<path d="M5 9 H12.5 L23.5 1 V32.5 L12.5 24 H5 Z" fill="none" stroke="#f4f4f4" stroke-width="2" stroke-linejoin="round"/>
<line x1="12.5" y1="9" x2="12.5" y2="24" stroke="#f4f4f4" stroke-width="2"/>
</svg>
<div class="b" style="left:1839px;top:348px;width:80px;height:25px;border:1px solid #888;border-radius:3px;"></div>
<div class="t" style="left:1842px;top:354px;font-size:15.5px;color:#f4f4f4;">DAB</div>
<svg style="left:1886px;top:358px" width="16" height="10"><path d="M0.5 0.5 L14 0.5 L7.25 6.5 Z" fill="#f4f4f4"/></svg>
<div class="b" style="left:0px;top:386px;width:1911px;height:1.6px;background:#f0f0f0;"></div>
<div class="b" style="left:0px;top:387px;width:216px;height:578px;background:#1a5883;"></div>
<div class="b" style="left:0px;top:387px;width:216px;height:43px;background:#0f2d4a;"></div>
<div class="t" style="left:7px;top:396.5px;font-size:27px;color:#f0f020;letter-spacing:0.5px;">dk4dab</div>
<div class="t" style="left:7px;top:439.5px;font-size:18.5px;color:#f4f4f4;">_myROCK</div>
<div class="t" style="left:7px;top:471.1px;font-size:18.5px;color:#f4f4f4;">_NOVA</div>
<div class="t" style="left:7px;top:502.7px;font-size:18.5px;color:#f4f4f4;">_Pop FM</div>
<div class="t" style="left:7px;top:534.3px;font-size:18.5px;color:#f4f4f4;">_Radio 100</div>
<div class="t" style="left:7px;top:565.9px;font-size:18.5px;color:#f4f4f4;">_Radio Klassisk</div>
<div class="t" style="left:7px;top:597.5px;font-size:18.5px;color:#f4f4f4;">_Radio Soft</div>
<div class="t" style="left:7px;top:629.1px;font-size:18.5px;color:#f4f4f4;">_The Voice</div>
<div class="t" style="left:7px;top:660.7px;font-size:18.5px;color:#f4f4f4;">BBC WorldService</div>
<div class="t" style="left:7px;top:692.3px;font-size:18.5px;color:#f4f4f4;">Classic Rock</div>
<div class="b" style="left:1px;top:716px;width:167px;height:29.5px;background:#21689b;border:1px solid #3a8cc4;"></div>
<div class="t" style="left:7px;top:723.9000000000001px;font-size:18.5px;color:#f4f4f4;">dk4dab</div>
<div class="t" style="left:7px;top:755.5px;font-size:18.5px;color:#f4f4f4;">ENERGY (NRJ)</div>
<div class="t" style="left:7px;top:787.1px;font-size:18.5px;color:#f4f4f4;">MTV Radio</div>
<div class="b" style="left:216px;top:387px;width:6px;height:578px;background:#e8eef4;"></div>
<div class="b" style="left:222px;top:387px;width:225px;height:578px;background:#1a5883;"></div>
<div class="b" style="left:222px;top:387px;width:225px;height:43px;background:#0f2d4a;"></div>
<div class="t" style="left:229px;top:397px;font-size:25px;color:#f4f4f4;letter-spacing:0.85px;">Service Quality</div>
<div class="t" style="left:235px;top:452.0px;font-size:16.8px;color:#f0f0f0;">SNR (dB)</div>
<div class="b" style="left:385px;top:443.0px;width:50px;height:31px;background:#8a8a8a;"></div>
<div class="b" style="left:385px;top:443.0px;width:15px;height:31px;background:#f0a010;"></div>
<div class="t" style="left:385px;top:452.0px;font-size:14.5px;color:#f0f0f0;width:50px;text-align:center;">10.4</div>
<div class="t" style="left:235px;top:490.6px;font-size:16.8px;color:#f0f0f0;">FIC (ok %)</div>
<div class="b" style="left:385px;top:481.6px;width:50px;height:31px;background:#8a8a8a;"></div>
<div class="b" style="left:385px;top:481.6px;width:50px;height:31px;background:#038403;"></div>
<div class="t" style="left:385px;top:490.6px;font-size:14.5px;color:#f0f0f0;width:50px;text-align:center;">100</div>
<div class="t" style="left:235px;top:529.2px;font-size:16.8px;color:#f0f0f0;">RS (ok %)</div>
<div class="b" style="left:385px;top:520.2px;width:50px;height:31px;background:#8a8a8a;"></div>
<div class="b" style="left:385px;top:520.2px;width:50px;height:31px;background:#038403;"></div>
<div class="t" style="left:385px;top:529.2px;font-size:14.5px;color:#f0f0f0;width:50px;text-align:center;">100</div>
<div class="t" style="left:235px;top:567.8px;font-size:16.8px;color:#f0f0f0;">Null Symbol</div>
<div class="b" style="left:385px;top:558.8px;width:50px;height:31px;background:#8a8a8a;"></div>
<div class="b" style="left:385px;top:558.8px;width:50px;height:31px;background:#038403;"></div>
<div class="t" style="left:235px;top:606.4px;font-size:16.8px;color:#f0f0f0;">SymbolTime (ms)</div>
<div class="b" style="left:385px;top:597.4px;width:50px;height:31px;background:#8a8a8a;"></div>
<div class="b" style="left:385px;top:597.4px;width:10px;height:31px;background:#038403;"></div>
<div class="t" style="left:385px;top:606.4px;font-size:14.5px;color:#f0f0f0;width:50px;text-align:center;">0.30</div>
<div class="t" style="left:235px;top:645.0px;font-size:16.8px;color:#f0f0f0;">FrameTime (ms)</div>
<div class="b" style="left:385px;top:636.0px;width:50px;height:31px;background:#8a8a8a;"></div>
<div class="b" style="left:385px;top:636.0px;width:32px;height:31px;background:#038403;"></div>
<div class="t" style="left:385px;top:645.0px;font-size:14.5px;color:#f0f0f0;width:50px;text-align:center;">95.7</div>
<div class="b" style="left:448px;top:387px;width:5px;height:578px;background:#c8d0d8;"></div>
<div class="b" style="left:453px;top:387px;width:466px;height:578px;background:#1a5883;"></div>
<div class="b" style="left:453px;top:387px;width:466px;height:43px;background:#0f2d4a;"></div>
<svg style="left:452px;top:387px" width="466" height="43">
<path d="M11 43 V13 Q11 9 15 9 H75 Q85 9 85 19 V43 Z" fill="#888888" stroke="#6f7a84" stroke-width="0.8"/>
<path d="M87 43 V13 Q87 9 91 9 H129 Q139 9 139 19 V43 Z" fill="#1a5883"/>
<path d="M141 43 V13 Q141 9 145 9 H217 Q227 9 227 19 V43 Z" fill="#888888" stroke="#6f7a84" stroke-width="0.8"/>
<path d="M229 43 V13 Q229 9 233 9 H291 Q301 9 301 19 V43 Z" fill="#888888" stroke="#6f7a84" stroke-width="0.8"/>
<path d="M303 43 V13 Q303 9 307 9 H398 Q408 9 408 19 V43 Z" fill="#888888" stroke="#6f7a84" stroke-width="0.8"/>
</svg>
<div class="t" style="left:478px;top:404px;font-size:21px;color:#d8d8d8;">Sync</div>
<div class="t" style="left:553px;top:404px;font-size:21px;color:#f4f4f4;">TII</div>
<div class="t" style="left:609px;top:404px;font-size:21px;color:#d8d8d8;">Audio</div>
<div class="t" style="left:697px;top:404px;font-size:21px;color:#d8d8d8;">AAC</div>
<div class="t" style="left:770px;top:404px;font-size:21px;color:#d8d8d8;">Options</div>
<div class="b" style="left:497px;top:443px;width:10px;height:10px;border-radius:50%;background:#ff1818;"></div>
<div class="b" style="left:533px;top:442px;width:11px;height:13px;background:#0f2d4a;"></div>
<div class="b" style="left:471px;top:466px;width:309px;height:1px;background:#a0b8cc;"></div>
<div class="b" style="left:793px;top:431px;width:1px;height:37px;background:#5a8ab0;"></div>
<div class="t" style="left:800px;top:455px;font-size:17.5px;color:#f0f0f0;">Threshold</div>
<div class="t" style="left:472px;top:492px;font-size:17.5px;color:#f0f0f0;">Pattern</div>
<div class="t" style="left:556px;top:492px;font-size:17.5px;color:#f0f0f0;">MainId</div>
<div class="t" style="left:638px;top:492px;font-size:17.5px;color:#f0f0f0;">SubId</div>
<div class="t" style="left:710px;top:492px;font-size:17.5px;color:#f0f0f0;">Strength</div>
<div class="b" style="left:471px;top:512px;width:309px;height:1px;background:#a0b8cc;"></div>
<div class="t" style="left:474px;top:529.5px;font-size:17.5px;color:#f0f0f0;">0x1b</div>
<div class="t" style="left:557px;top:529.5px;font-size:17.5px;color:#f0f0f0;">2</div>
<div class="t" style="left:640px;top:529.5px;font-size:17.5px;color:#f0f0f0;">10</div>
<div class="t" style="left:712px;top:529.5px;font-size:17.5px;color:#f0f0f0;">0.98</div>
<div class="b" style="left:833px;top:493px;width:3px;height:137px;background:#e0e0e0;border-radius:1px;"></div>
<div class="b" style="left:826px;top:622px;width:16px;height:16px;border-radius:50%;background:radial-gradient(circle at 45% 30%,#eeeeee,#a0a0a0 60%,#6a6a6a);"></div>
<div class="t" style="left:784px;top:653px;font-size:17px;color:#f0f0f0;width:100px;text-align:center;">0.05</div>
<div class="b" style="left:919px;top:387px;width:6px;height:578px;background:#eef2f6;"></div>
<div class="b" style="left:925px;top:387px;width:986px;height:301px;background:#000;"></div>
<div class="b" style="left:925px;top:387px;width:986px;height:25px;background:#0f2d4a;"></div>
<div class="t" style="left:925px;top:389px;font-size:17.8px;color:#f0f0f0;width:996px;text-align:center;">Channel Impulse Response (CIR)</div>
<svg style="left:925px;top:387px" width="986" height="24">
<path d="M952 6 L967 6 L959.5 19 Z" fill="none" stroke="#ddd" stroke-width="1.2"/>
<path d="M974 6 L986 19 M986 6 L974 19" stroke="#d0602a" stroke-width="3"/>
</svg>
<div class="b" style="left:937.5px;top:426.0px;width:17px;height:17px;border-radius:50%;background:#e4e4e4;"></div>
<div class="t" style="left:959px;top:428px;font-size:14.5px;color:#f0f0f0;">Freeze</div>
<div class="b" style="left:1026.5px;top:426.0px;width:17px;height:17px;border-radius:50%;background:#e4e4e4;"></div>
<div class="t" style="left:1048px;top:428px;font-size:14.5px;color:#f0f0f0;">Gradient</div>
<div class="t" style="left:943px;top:479px;font-size:14.5px;color:#f0f0f0;">Smoothing Level</div>
<div class="b" style="left:937px;top:515.2px;width:173px;height:2.4px;background:#e4e4e4;border-radius:1px;"></div>
<div class="b" style="left:945px;top:504px;width:1px;height:4px;background:#bbb;"></div>
<div class="b" style="left:961px;top:504px;width:1px;height:4px;background:#bbb;"></div>
<div class="b" style="left:977px;top:504px;width:1px;height:4px;background:#bbb;"></div>
<div class="b" style="left:993px;top:504px;width:1px;height:4px;background:#bbb;"></div>
<div class="b" style="left:1009px;top:504px;width:1px;height:4px;background:#bbb;"></div>
<div class="b" style="left:1026px;top:504px;width:1px;height:4px;background:#bbb;"></div>
<div class="b" style="left:1042px;top:504px;width:1px;height:4px;background:#bbb;"></div>
<div class="b" style="left:1058px;top:504px;width:1px;height:4px;background:#bbb;"></div>
<div class="b" style="left:1074px;top:504px;width:1px;height:4px;background:#bbb;"></div>
<div class="b" style="left:1090px;top:504px;width:1px;height:4px;background:#bbb;"></div>
<div class="b" style="left:1106px;top:504px;width:1px;height:4px;background:#bbb;"></div>
<div class="b" style="left:1020px;top:508px;width:16px;height:16px;border-radius:50%;background:radial-gradient(circle at 45% 30%,#eeeeee,#a0a0a0 60%,#6a6a6a);"></div>
<div class="t" style="left:943px;top:546px;font-size:14.5px;color:#f0f0f0;">Zoom X</div>
<div class="b" style="left:937px;top:577.2px;width:173px;height:2.4px;background:#e4e4e4;border-radius:1px;"></div>
<div class="b" style="left:938px;top:570px;width:16px;height:16px;border-radius:50%;background:radial-gradient(circle at 45% 30%,#eeeeee,#a0a0a0 60%,#6a6a6a);"></div>
<div class="t" style="left:943px;top:609px;font-size:14.5px;color:#f0f0f0;">Zoom Y</div>
<div class="b" style="left:937px;top:639.2px;width:173px;height:2.4px;background:#e4e4e4;border-radius:1px;"></div>
<div class="b" style="left:938px;top:632px;width:16px;height:16px;border-radius:50%;background:radial-gradient(circle at 45% 30%,#eeeeee,#a0a0a0 60%,#6a6a6a);"></div>
<div class="t" style="left:943px;top:672px;font-size:14.5px;color:#f0f0f0;">x-Axis</div>
<div class="b" style="left:1118px;top:413px;width:6px;height:207px;background:#9a9a9a;border-radius:3px;"></div>
<div class="b" style="left:1131px;top:411px;width:1px;height:277px;background:#333;"></div>
<svg style="left:0;top:0" width="1911" height="688">
<rect x="1377" y="432" width="23" height="196" fill="#4a4a4a"/>
<line x1="1248" y1="432.5" x2="1867" y2="432.5" stroke="#a8a8a8" stroke-width="1"/><line x1="1248" y1="471.5" x2="1867" y2="471.5" stroke="#a8a8a8" stroke-width="1"/><line x1="1248" y1="510.5" x2="1867" y2="510.5" stroke="#a8a8a8" stroke-width="1"/><line x1="1248" y1="550.5" x2="1867" y2="550.5" stroke="#a8a8a8" stroke-width="1"/><line x1="1248" y1="589.5" x2="1867" y2="589.5" stroke="#a8a8a8" stroke-width="1"/><line x1="1248" y1="627.5" x2="1867" y2="627.5" stroke="#a8a8a8" stroke-width="1"/><line x1="1276.5" y1="432" x2="1276.5" y2="628" stroke="#a8a8a8" stroke-width="1"/><line x1="1318.5" y1="432" x2="1318.5" y2="628" stroke="#a8a8a8" stroke-width="1"/><line x1="1359.5" y1="432" x2="1359.5" y2="628" stroke="#a8a8a8" stroke-width="1"/><line x1="1400.5" y1="432" x2="1400.5" y2="628" stroke="#a8a8a8" stroke-width="1"/><line x1="1441.5" y1="432" x2="1441.5" y2="628" stroke="#a8a8a8" stroke-width="1"/><line x1="1483.5" y1="432" x2="1483.5" y2="628" stroke="#a8a8a8" stroke-width="1"/><line x1="1524.5" y1="432" x2="1524.5" y2="628" stroke="#a8a8a8" stroke-width="1"/><line x1="1565.5" y1="432" x2="1565.5" y2="628" stroke="#a8a8a8" stroke-width="1"/><line x1="1606.5" y1="432" x2="1606.5" y2="628" stroke="#a8a8a8" stroke-width="1"/><line x1="1648.5" y1="432" x2="1648.5" y2="628" stroke="#a8a8a8" stroke-width="1"/><line x1="1689.5" y1="432" x2="1689.5" y2="628" stroke="#a8a8a8" stroke-width="1"/><line x1="1730.5" y1="432" x2="1730.5" y2="628" stroke="#a8a8a8" stroke-width="1"/><line x1="1771.5" y1="432" x2="1771.5" y2="628" stroke="#a8a8a8" stroke-width="1"/><line x1="1813.5" y1="432" x2="1813.5" y2="628" stroke="#a8a8a8" stroke-width="1"/><line x1="1854.5" y1="432" x2="1854.5" y2="628" stroke="#a8a8a8" stroke-width="1"/>
<rect x="1248.5" y="432.5" width="618" height="195" fill="none" stroke="#b0b0b0" stroke-width="1.5"/>
<line x1="1400.5" y1="432" x2="1400.5" y2="628" stroke="#e8e040" stroke-width="1" stroke-dasharray="2,1"/>
<polyline points="1248.0,593.3 1249.0,592.6 1250.0,593.3 1251.0,599.4 1252.0,602.7 1253.0,601.8 1254.0,594.3 1255.0,583.2 1256.0,582.1 1257.0,587.0 1258.0,589.2 1259.0,593.5 1260.0,593.9 1261.0,599.0 1262.0,599.5 1263.0,601.1 1264.0,598.9 1265.0,586.3 1266.0,587.6 1267.0,583.0 1268.0,591.1 1269.0,596.1 1270.0,598.4 1271.0,597.4 1272.0,598.1 1273.0,596.6 1274.0,593.6 1275.0,592.9 1276.0,590.2 1277.0,591.7 1278.0,591.3 1279.0,599.7 1280.0,598.7 1281.0,595.0 1282.0,597.5 1283.0,597.3 1284.0,599.9 1285.0,599.4 1286.0,588.4 1287.0,588.9 1288.0,589.3 1289.0,601.6 1290.0,605.8 1291.0,595.4 1292.0,587.3 1293.0,579.0 1294.0,582.4 1295.0,591.8 1296.0,592.8 1297.0,599.3 1298.0,603.1 1299.0,601.1 1300.0,591.2 1301.0,586.3 1302.0,594.7 1303.0,604.9 1304.0,608.9 1305.0,603.6 1306.0,595.1 1307.0,594.4 1308.0,599.8 1309.0,602.1 1310.0,608.2 1311.0,611.3 1312.0,602.8 1313.0,592.6 1314.0,587.7 1315.0,585.3 1316.0,591.7 1317.0,598.2 1318.0,604.3 1319.0,603.4 1320.0,599.8 1321.0,591.9 1322.0,587.3 1323.0,587.2 1324.0,589.4 1325.0,592.2 1326.0,598.2 1327.0,593.0 1328.0,596.6 1329.0,598.1 1330.0,589.9 1331.0,582.1 1332.0,583.0 1333.0,584.2 1334.0,590.6 1335.0,595.1 1336.0,606.4 1337.0,603.1 1338.0,600.1 1339.0,595.1 1340.0,589.1 1341.0,587.7 1342.0,588.6 1343.0,590.1 1344.0,587.8 1345.0,585.4 1346.0,590.2 1347.0,590.3 1348.0,593.6 1349.0,593.4 1350.0,592.2 1351.0,593.3 1352.0,593.5 1353.0,593.4 1354.0,590.5 1355.0,585.9 1356.0,590.2 1357.0,594.5 1358.0,597.9 1359.0,601.5 1360.0,597.6 1361.0,590.7 1362.0,583.4 1363.0,573.9 1364.0,576.8 1365.0,585.3 1366.0,592.4 1367.0,589.1 1368.0,593.6 1369.0,590.2 1370.0,585.6 1371.0,587.3 1372.0,585.7 1373.0,581.0 1374.0,582.1 1375.0,586.5 1376.0,594.4 1377.0,605.7 1378.0,605.5 1379.0,603.7 1380.0,596.9 1381.0,593.1 1382.0,592.3 1383.0,595.2 1384.0,593.4 1385.0,590.8 1386.0,594.8 1387.0,594.5 1388.0,588.0 1389.0,585.7 1390.0,585.3 1391.0,581.9 1392.0,577.8 1393.0,577.7 1394.0,579.1 1395.0,578.8 1396.0,575.0 1397.0,559.0 1398.0,543.0 1399.0,527.0 1400.0,496.0 1401.0,496.0 1402.0,496.0 1403.0,524.7 1404.0,534.9 1405.0,543.1 1406.0,549.7 1407.0,554.9 1408.0,559.1 1409.0,562.5 1410.0,565.2 1411.0,567.3 1412.0,569.1 1413.0,570.4 1414.0,571.5 1415.0,572.4 1416.0,573.1 1417.0,592.0 1418.0,590.2 1419.0,594.0 1420.0,600.9 1421.0,597.8 1422.0,590.1 1423.0,577.0 1424.0,574.1 1425.0,578.5 1426.0,586.8 1427.0,591.9 1428.0,593.1 1429.0,595.1 1430.0,593.7 1431.0,585.8 1432.0,584.6 1433.0,584.8 1434.0,584.0 1435.0,590.7 1436.0,600.8 1437.0,606.0 1438.0,595.2 1439.0,583.5 1440.0,582.3 1441.0,586.7 1442.0,590.4 1443.0,596.7 1444.0,597.1 1445.0,594.0 1446.0,596.9 1447.0,596.0 1448.0,591.2 1449.0,590.4 1450.0,590.1 1451.0,592.9 1452.0,596.1 1453.0,599.1 1454.0,597.8 1455.0,596.0 1456.0,592.2 1457.0,585.7 1458.0,584.5 1459.0,581.5 1460.0,583.3 1461.0,586.9 1462.0,591.4 1463.0,593.8 1464.0,588.5 1465.0,582.9 1466.0,582.5 1467.0,583.8 1468.0,587.5 1469.0,590.0 1470.0,583.1 1471.0,576.0 1472.0,575.6 1473.0,580.9 1474.0,584.3 1475.0,586.9 1476.0,588.7 1477.0,588.1 1478.0,586.4 1479.0,589.8 1480.0,585.7 1481.0,576.4 1482.0,569.3 1483.0,573.8 1484.0,580.4 1485.0,583.5 1486.0,586.5 1487.0,585.5 1488.0,577.1 1489.0,570.5 1490.0,569.0 1491.0,571.5 1492.0,580.8 1493.0,578.8 1494.0,577.1 1495.0,576.2 1496.0,581.0 1497.0,580.7 1498.0,568.8 1499.0,562.7 1500.0,565.6 1501.0,575.6 1502.0,584.5 1503.0,587.1 1504.0,583.4 1505.0,579.9 1506.0,576.8 1507.0,586.0 1508.0,592.5 1509.0,589.2 1510.0,587.2 1511.0,587.1 1512.0,587.6 1513.0,587.7 1514.0,589.1 1515.0,582.0 1516.0,574.7 1517.0,568.4 1518.0,573.0 1519.0,576.9 1520.0,584.1 1521.0,589.5 1522.0,586.1 1523.0,580.9 1524.0,573.7 1525.0,565.4 1526.0,563.4 1527.0,565.5 1528.0,571.6 1529.0,572.8 1530.0,569.6 1531.0,564.8 1532.0,566.8 1533.0,566.4 1534.0,565.0 1535.0,558.2 1536.0,561.0 1537.0,571.1 1538.0,576.6 1539.0,584.1 1540.0,588.7 1541.0,585.6 1542.0,581.6 1543.0,582.2 1544.0,584.8 1545.0,587.8 1546.0,588.3 1547.0,583.5 1548.0,579.8 1549.0,574.1 1550.0,576.4 1551.0,580.4 1552.0,583.6 1553.0,592.4 1554.0,597.6 1555.0,596.6 1556.0,589.3 1557.0,580.8 1558.0,573.1 1559.0,573.0 1560.0,580.8 1561.0,599.2 1562.0,608.3 1563.0,598.3 1564.0,585.1 1565.0,577.6 1566.0,574.5 1567.0,579.5 1568.0,587.0 1569.0,596.9 1570.0,601.0 1571.0,597.2 1572.0,589.5 1573.0,586.9 1574.0,589.6 1575.0,590.9 1576.0,591.3 1577.0,586.3 1578.0,580.2 1579.0,580.2 1580.0,579.1 1581.0,585.2 1582.0,589.6 1583.0,591.8 1584.0,586.1 1585.0,578.4 1586.0,577.0 1587.0,582.3 1588.0,583.3 1589.0,584.4 1590.0,582.8 1591.0,586.5 1592.0,591.5 1593.0,587.5 1594.0,584.9 1595.0,587.0 1596.0,588.2 1597.0,587.7 1598.0,594.6 1599.0,591.5 1600.0,587.7 1601.0,587.8 1602.0,587.0 1603.0,591.9 1604.0,593.0 1605.0,590.1 1606.0,581.3 1607.0,584.0 1608.0,586.9 1609.0,586.2 1610.0,586.8 1611.0,589.5 1612.0,590.6 1613.0,583.0 1614.0,586.3 1615.0,586.8 1616.0,593.8 1617.0,596.0 1618.0,594.7 1619.0,588.0 1620.0,584.2 1621.0,585.5 1622.0,588.0 1623.0,592.7 1624.0,589.5 1625.0,589.1 1626.0,583.4 1627.0,580.5 1628.0,587.8 1629.0,593.6 1630.0,597.3 1631.0,586.2 1632.0,585.7 1633.0,585.1 1634.0,591.0 1635.0,594.1 1636.0,597.2 1637.0,599.2 1638.0,592.9 1639.0,589.8 1640.0,593.6 1641.0,587.2 1642.0,586.9 1643.0,588.7 1644.0,588.8 1645.0,585.0 1646.0,590.4 1647.0,589.1 1648.0,593.1 1649.0,590.9 1650.0,580.7 1651.0,580.3 1652.0,584.0 1653.0,591.6 1654.0,591.8 1655.0,588.7 1656.0,589.1 1657.0,583.4 1658.0,583.5 1659.0,589.0 1660.0,593.1 1661.0,599.9 1662.0,600.9 1663.0,597.8 1664.0,596.6 1665.0,596.4 1666.0,590.8 1667.0,588.6 1668.0,589.4 1669.0,591.2 1670.0,596.4 1671.0,594.5 1672.0,591.0 1673.0,594.0 1674.0,589.5 1675.0,592.1 1676.0,598.1 1677.0,599.4 1678.0,593.9 1679.0,585.5 1680.0,586.8 1681.0,591.8 1682.0,601.2 1683.0,599.2 1684.0,595.2 1685.0,589.5 1686.0,581.9 1687.0,591.9 1688.0,591.1 1689.0,593.9 1690.0,595.4 1691.0,593.4 1692.0,591.7 1693.0,595.5 1694.0,599.6 1695.0,604.0 1696.0,604.7 1697.0,600.8 1698.0,596.7 1699.0,595.1 1700.0,592.3 1701.0,596.1 1702.0,598.5 1703.0,595.2 1704.0,596.1 1705.0,600.7 1706.0,603.8 1707.0,598.8 1708.0,593.6 1709.0,581.7 1710.0,584.6 1711.0,590.9 1712.0,596.5 1713.0,596.9 1714.0,601.3 1715.0,599.1 1716.0,590.1 1717.0,592.4 1718.0,597.7 1719.0,600.1 1720.0,599.6 1721.0,590.5 1722.0,588.4 1723.0,584.6 1724.0,598.6 1725.0,606.2 1726.0,605.6 1727.0,596.6 1728.0,586.4 1729.0,586.8 1730.0,586.0 1731.0,593.5 1732.0,594.7 1733.0,598.4 1734.0,599.7 1735.0,598.7 1736.0,598.2 1737.0,598.0 1738.0,593.7 1739.0,594.7 1740.0,594.5 1741.0,594.0 1742.0,595.8 1743.0,599.5 1744.0,600.9 1745.0,597.1 1746.0,596.4 1747.0,595.2 1748.0,596.3 1749.0,594.7 1750.0,592.2 1751.0,591.6 1752.0,594.2 1753.0,601.3 1754.0,603.6 1755.0,597.3 1756.0,594.8 1757.0,599.4 1758.0,599.6 1759.0,597.9 1760.0,596.2 1761.0,593.2 1762.0,595.9 1763.0,599.3 1764.0,600.4 1765.0,597.0 1766.0,594.8 1767.0,590.5 1768.0,588.1 1769.0,594.5 1770.0,595.7 1771.0,591.3 1772.0,593.1 1773.0,590.5 1774.0,594.1 1775.0,595.6 1776.0,596.5 1777.0,598.2 1778.0,597.0 1779.0,596.0 1780.0,592.2 1781.0,593.6 1782.0,594.4 1783.0,600.7 1784.0,601.8 1785.0,609.6 1786.0,603.7 1787.0,593.8 1788.0,587.8 1789.0,587.7 1790.0,590.1 1791.0,596.2 1792.0,599.6 1793.0,603.2 1794.0,604.9 1795.0,604.7 1796.0,598.9 1797.0,590.8 1798.0,591.8 1799.0,598.8 1800.0,602.2 1801.0,599.9 1802.0,595.3 1803.0,595.7 1804.0,594.0 1805.0,584.6 1806.0,583.4 1807.0,581.0 1808.0,585.0 1809.0,593.6 1810.0,601.7 1811.0,605.8 1812.0,604.8 1813.0,594.5 1814.0,583.1 1815.0,583.4 1816.0,588.5 1817.0,594.0 1818.0,602.6 1819.0,600.0 1820.0,608.3 1821.0,605.4 1822.0,602.5 1823.0,590.8 1824.0,590.9 1825.0,594.7 1826.0,598.4 1827.0,603.7 1828.0,607.9 1829.0,602.2 1830.0,591.2 1831.0,590.7 1832.0,594.3 1833.0,595.9 1834.0,595.4 1835.0,595.6 1836.0,591.7 1837.0,592.4 1838.0,595.5 1839.0,599.3 1840.0,596.7 1841.0,590.3 1842.0,588.5 1843.0,589.1 1844.0,593.4 1845.0,596.7 1846.0,597.4 1847.0,598.9 1848.0,593.5 1849.0,592.8 1850.0,598.3 1851.0,603.3 1852.0,597.6 1853.0,592.7 1854.0,590.9 1855.0,587.9 1856.0,589.7 1857.0,592.2 1858.0,592.9 1859.0,590.8 1860.0,588.2 1861.0,591.2 1862.0,595.6 1863.0,599.6 1864.0,599.2 1865.0,594.5 1866.0,591.1" fill="none" stroke="#f2f2f2" stroke-width="1.4" stroke-linejoin="round"/>
<circle cx="1401" cy="495.5" r="5" fill="#ffea00"/>
<circle cx="1452" cy="574" r="5" fill="#1ea0e0"/>
<circle cx="1507" cy="572.5" r="5" fill="#7a30e0"/>
<circle cx="1530" cy="568" r="5" fill="#ee1010"/>
</svg>
<div class="t" style="left:1137px;top:423px;font-size:17px;color:#f0f0f0;width:100px;text-align:right;">-10.0</div>
<div class="t" style="left:1137px;top:462px;font-size:17px;color:#f0f0f0;width:100px;text-align:right;">-20.0</div>
<div class="t" style="left:1137px;top:501.5px;font-size:17px;color:#f0f0f0;width:100px;text-align:right;">-30.0</div>
<div class="t" style="left:1137px;top:541px;font-size:17px;color:#f0f0f0;width:100px;text-align:right;">-40.0</div>
<div class="t" style="left:1137px;top:580.5px;font-size:17px;color:#f0f0f0;width:100px;text-align:right;">-50.0</div>
<div class="t" style="left:1137px;top:619px;font-size:17px;color:#f0f0f0;width:100px;text-align:right;">-60.0</div>
<div class="t" style="left:1246.3px;top:633px;font-size:15px;color:#f0f0f0;width:60px;text-align:center;letter-spacing:-1px;">-60</div>
<div class="t" style="left:1287.55px;top:633px;font-size:15px;color:#f0f0f0;width:60px;text-align:center;letter-spacing:-1px;">-40</div>
<div class="t" style="left:1328.8px;top:633px;font-size:15px;color:#f0f0f0;width:60px;text-align:center;letter-spacing:-1px;">-20</div>
<div class="t" style="left:1370.05px;top:633px;font-size:15px;color:#f0f0f0;width:60px;text-align:center;letter-spacing:-1px;">0</div>
<div class="t" style="left:1411.3px;top:633px;font-size:15px;color:#f0f0f0;width:60px;text-align:center;letter-spacing:-1px;">20</div>
<div class="t" style="left:1452.55px;top:633px;font-size:15px;color:#f0f0f0;width:60px;text-align:center;letter-spacing:-1px;">40</div>
<div class="t" style="left:1493.8px;top:633px;font-size:15px;color:#f0f0f0;width:60px;text-align:center;letter-spacing:-1px;">60</div>
<div class="t" style="left:1535.05px;top:633px;font-size:15px;color:#f0f0f0;width:60px;text-align:center;letter-spacing:-1px;">80</div>
<div class="t" style="left:1576.3px;top:633px;font-size:15px;color:#f0f0f0;width:60px;text-align:center;letter-spacing:-1px;">100</div>
<div class="t" style="left:1617.55px;top:633px;font-size:15px;color:#f0f0f0;width:60px;text-align:center;letter-spacing:-1px;">120</div>
<div class="t" style="left:1658.8px;top:633px;font-size:15px;color:#f0f0f0;width:60px;text-align:center;letter-spacing:-1px;">140</div>
<div class="t" style="left:1700.05px;top:633px;font-size:15px;color:#f0f0f0;width:60px;text-align:center;letter-spacing:-1px;">160</div>
<div class="t" style="left:1741.3px;top:633px;font-size:15px;color:#f0f0f0;width:60px;text-align:center;letter-spacing:-1px;">180</div>
<div class="t" style="left:1782.55px;top:633px;font-size:15px;color:#f0f0f0;width:60px;text-align:center;letter-spacing:-1px;">200</div>
<div class="t" style="left:1823.8px;top:633px;font-size:15px;color:#f0f0f0;width:60px;text-align:center;letter-spacing:-1px;">220</div>
<div class="t" style="left:1457px;top:655px;font-size:17.5px;color:#f0f0f0;width:200px;text-align:center;">Distance Difference (km)</div>
<div class="t" style="left:1074px;top:521px;font-size:15.5px;color:#f0f0f0;width:200px;text-align:center;transform:rotate(-90deg);font-weight:bold;">Magnitude (dB)</div>
<div class="b" style="left:925px;top:686px;width:986px;height:6px;background:#888;"></div>
<div class="b" style="left:925px;top:692px;width:986px;height:273px;background:#000;"></div>
<div class="b" style="left:925px;top:692px;width:986px;height:25px;background:#0f2d4a;"></div>
<div class="t" style="left:925px;top:694px;font-size:18.5px;color:#f0f0f0;width:996px;text-align:center;">TII Carriers</div>
<svg style="left:925px;top:693px" width="986" height="23">
<path d="M952 5 L967 5 L959.5 18 Z" fill="none" stroke="#ddd" stroke-width="1.2"/>
<path d="M974 5 L986 18 M986 5 L974 18" stroke="#d0602a" stroke-width="3"/>
</svg>
<svg style="left:0;top:0" width="1911" height="965">
<rect x="1035" y="894" width="824" height="7" fill="#4a4a4a"/>
<line x1="1035" y1="735.5" x2="1859" y2="735.5" stroke="#a0a0a0" stroke-width="1"/><line x1="1035" y1="769" x2="1859" y2="769" stroke="#a0a0a0" stroke-width="1"/><line x1="1035" y1="802.5" x2="1859" y2="802.5" stroke="#a0a0a0" stroke-width="1"/><line x1="1035" y1="836" x2="1859" y2="836" stroke="#a0a0a0" stroke-width="1"/><line x1="1035" y1="869" x2="1859" y2="869" stroke="#a0a0a0" stroke-width="1"/><line x1="1035" y1="901.5" x2="1859" y2="901.5" stroke="#a0a0a0" stroke-width="1"/><line x1="1085.4" y1="735" x2="1085.4" y2="902" stroke="#a0a0a0" stroke-width="1"/><line x1="1165.9" y1="735" x2="1165.9" y2="902" stroke="#a0a0a0" stroke-width="1"/><line x1="1246.4" y1="735" x2="1246.4" y2="902" stroke="#a0a0a0" stroke-width="1"/><line x1="1326.8" y1="735" x2="1326.8" y2="902" stroke="#a0a0a0" stroke-width="1"/><line x1="1407.3" y1="735" x2="1407.3" y2="902" stroke="#a0a0a0" stroke-width="1"/><line x1="1487.8" y1="735" x2="1487.8" y2="902" stroke="#a0a0a0" stroke-width="1"/><line x1="1568.3" y1="735" x2="1568.3" y2="902" stroke="#a0a0a0" stroke-width="1"/><line x1="1648.8" y1="735" x2="1648.8" y2="902" stroke="#a0a0a0" stroke-width="1"/><line x1="1729.2" y1="735" x2="1729.2" y2="902" stroke="#a0a0a0" stroke-width="1"/><line x1="1809.7" y1="735" x2="1809.7" y2="902" stroke="#a0a0a0" stroke-width="1"/>
<line x1="1036" y1="899" x2="1138" y2="899" stroke="#aaa" stroke-width="1"/>
<line x1="1757" y1="899" x2="1858" y2="899" stroke="#aaa" stroke-width="1"/>
<rect x="1035" y="735.5" width="824" height="166" fill="none" stroke="#b0b0b0" stroke-width="1.5"/>
<path d="M1204.3,901 L1204.9,802.5 L1205.1,777.5 L1206.1,777.5 L1206.3,802.5 L1206.9,901 Z" fill="#ececec"/><path d="M1223.5,901 L1224.1,804.5 L1224.3,779.5 L1225.3,779.5 L1225.5,804.5 L1226.1,901 Z" fill="#ececec"/><path d="M1261.6,901 L1262.2,818 L1262.4,793 L1263.4,793 L1263.6,818 L1264.2,901 Z" fill="#ececec"/><path d="M1281.4,901 L1282.0,813.4 L1282.2,788.4 L1283.2,788.4 L1283.4,813.4 L1284.0,901 Z" fill="#ececec"/><path d="M1339.6,901 L1340.6,884.7 L1341.6,884.7 L1342.6,901 Z" fill="#d8d8d8"/><path d="M1358.7,901 L1359.3,849 L1359.5,824 L1360.5,824 L1360.7,849 L1361.3,901 Z" fill="#ececec"/><path d="M1377.7,901 L1378.3,836 L1378.5,811 L1379.5,811 L1379.7,836 L1380.3,901 Z" fill="#ececec"/><path d="M1416.7,901 L1417.3,805.4 L1417.5,780.4 L1418.5,780.4 L1418.7,805.4 L1419.3,901 Z" fill="#ececec"/><path d="M1435.6,901 L1436.2,807.2 L1436.4,782.2 L1437.4,782.2 L1437.6,807.2 L1438.2,901 Z" fill="#ececec"/><path d="M1467.5,901 L1468.5,884 L1469.5,884 L1470.5,901 Z" fill="#d8d8d8"/><path d="M1513.7,901 L1514.3,781.2 L1514.5,756.2 L1515.5,756.2 L1515.7,781.2 L1516.3,901 Z" fill="#ececec"/><path d="M1533.1,901 L1533.7,784.2 L1533.9,759.2 L1534.9,759.2 L1535.1,784.2 L1535.7,901 Z" fill="#ececec"/><path d="M1571.5,901 L1572.1,777 L1572.3,752 L1573.3,752 L1573.5,777 L1574.1,901 Z" fill="#ececec"/><path d="M1590.7,901 L1591.3,775 L1591.5,750 L1592.5,750 L1592.7,775 L1593.3,901 Z" fill="#ececec"/><path d="M1668.1,901 L1668.7,778 L1668.9,753 L1669.9,753 L1670.1,778 L1670.7,901 Z" fill="#ececec"/><path d="M1687.3,901 L1687.9,762 L1688.1,737 L1689.1,737 L1689.3,762 L1689.9,901 Z" fill="#ececec"/><path d="M1725.7,901 L1726.3,791.6 L1726.5,766.6 L1727.5,766.6 L1727.7,791.6 L1728.3,901 Z" fill="#ececec"/><path d="M1745.2,901 L1745.8,792 L1746.0,767 L1747.0,767 L1747.2,792 L1747.8,901 Z" fill="#ececec"/>
<line x1="1138.5" y1="736" x2="1138.5" y2="901" stroke="#e0d020" stroke-width="2" stroke-dasharray="2,2"/><line x1="1293.6" y1="736" x2="1293.6" y2="901" stroke="#e0d020" stroke-width="2" stroke-dasharray="2,2"/><line x1="1447.3" y1="736" x2="1447.3" y2="901" stroke="#e0d020" stroke-width="2" stroke-dasharray="2,2"/><line x1="1602.4" y1="736" x2="1602.4" y2="901" stroke="#e0d020" stroke-width="2" stroke-dasharray="2,2"/><line x1="1757.5" y1="736" x2="1757.5" y2="901" stroke="#e0d020" stroke-width="2" stroke-dasharray="2,2"/>
</svg>
<div class="t" style="left:922px;top:726.5px;font-size:17px;color:#f0f0f0;width:100px;text-align:right;">1.0</div>
<div class="t" style="left:922px;top:760px;font-size:17px;color:#f0f0f0;width:100px;text-align:right;">0.8</div>
<div class="t" style="left:922px;top:793.5px;font-size:17px;color:#f0f0f0;width:100px;text-align:right;">0.6</div>
<div class="t" style="left:922px;top:827px;font-size:17px;color:#f0f0f0;width:100px;text-align:right;">0.4</div>
<div class="t" style="left:922px;top:860px;font-size:17px;color:#f0f0f0;width:100px;text-align:right;">0.2</div>
<div class="t" style="left:922px;top:892.5px;font-size:17px;color:#f0f0f0;width:100px;text-align:right;">0.0</div>
<div class="t" style="left:1045.4px;top:908px;font-size:16px;color:#f0f0f0;width:80px;text-align:center;">-900</div>
<div class="t" style="left:1125.88px;top:908px;font-size:16px;color:#f0f0f0;width:80px;text-align:center;">-700</div>
<div class="t" style="left:1206.3600000000001px;top:908px;font-size:16px;color:#f0f0f0;width:80px;text-align:center;">-500</div>
<div class="t" style="left:1286.8400000000001px;top:908px;font-size:16px;color:#f0f0f0;width:80px;text-align:center;">-300</div>
<div class="t" style="left:1367.3200000000002px;top:908px;font-size:16px;color:#f0f0f0;width:80px;text-align:center;">-100</div>
<div class="t" style="left:1447.8000000000002px;top:908px;font-size:16px;color:#f0f0f0;width:80px;text-align:center;">100</div>
<div class="t" style="left:1528.2800000000002px;top:908px;font-size:16px;color:#f0f0f0;width:80px;text-align:center;">300</div>
<div class="t" style="left:1608.7600000000002px;top:908px;font-size:16px;color:#f0f0f0;width:80px;text-align:center;">500</div>
<div class="t" style="left:1689.2400000000002px;top:908px;font-size:16px;color:#f0f0f0;width:80px;text-align:center;">700</div>
<div class="t" style="left:1769.7200000000003px;top:908px;font-size:16px;color:#f0f0f0;width:80px;text-align:center;">900</div>
<div class="t" style="left:1347px;top:931.5px;font-size:16.5px;color:#f0f0f0;width:200px;text-align:center;">TII Subcarrier</div>
<div class="t" style="left:874px;top:810px;font-size:16px;color:#f0f0f0;width:200px;text-align:center;transform:rotate(-90deg);font-weight:bold;">Magnitude</div>
<div class="b" style="left:925px;top:961px;width:986px;height:4px;background:#888;"></div>
</body></html>
